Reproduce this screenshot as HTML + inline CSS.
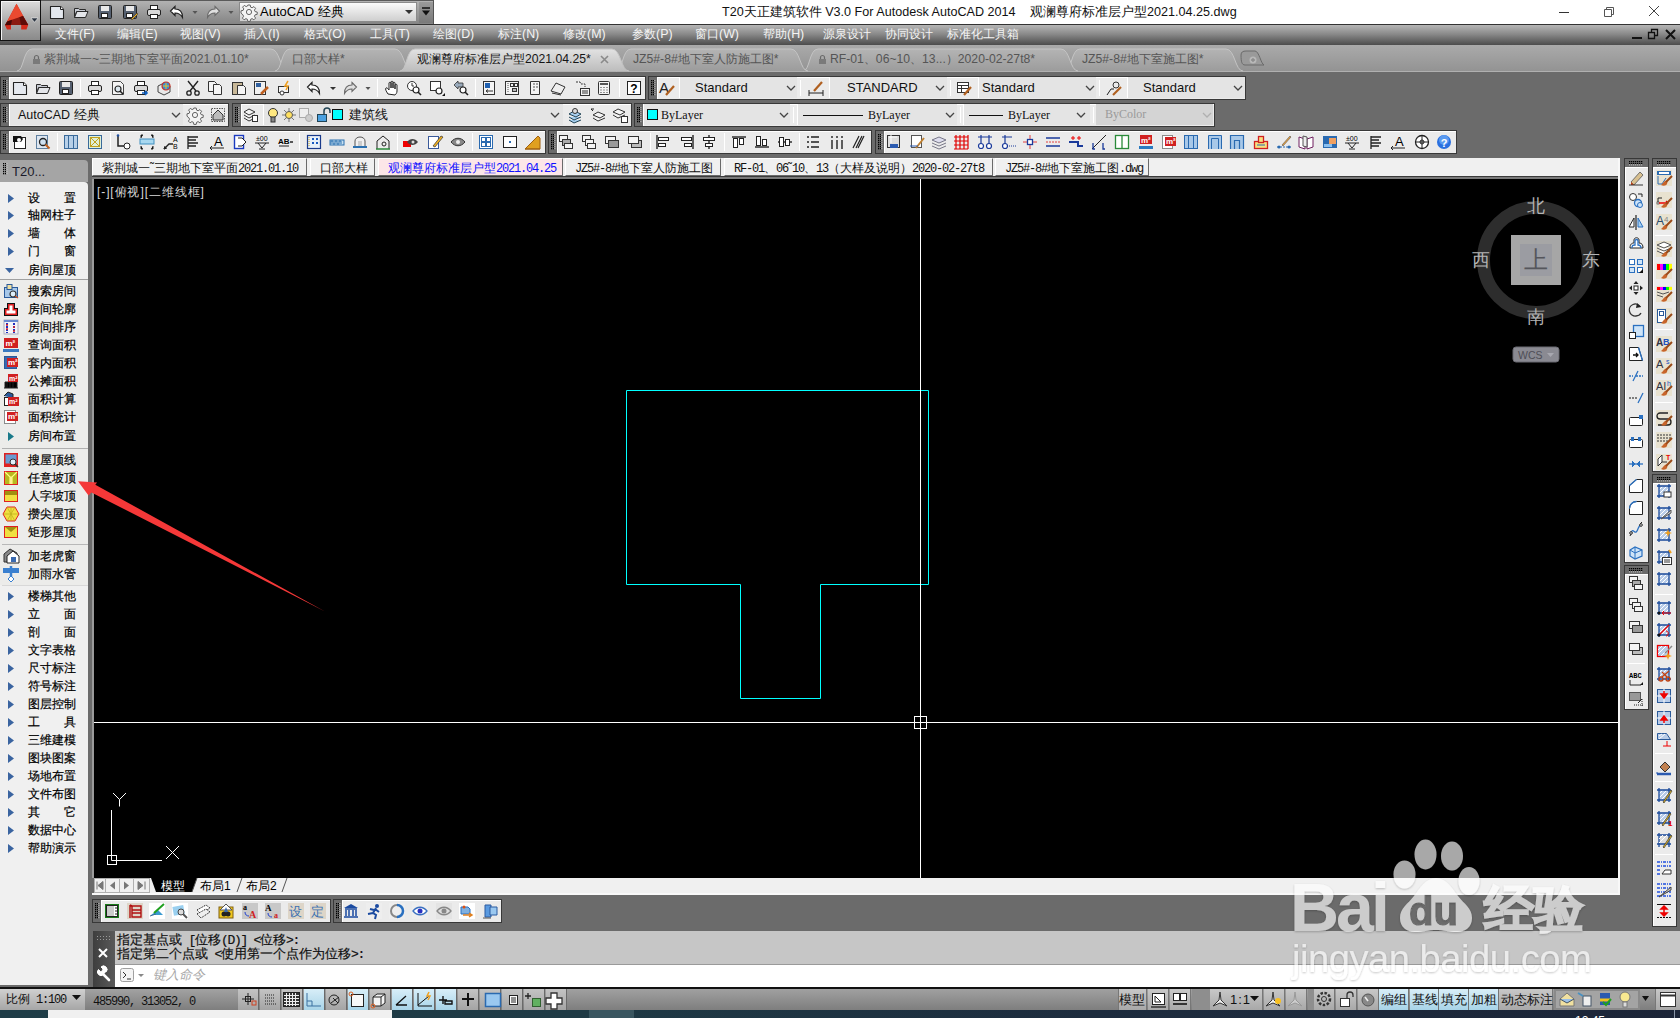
<!DOCTYPE html>
<html><head><meta charset="utf-8"><style>
*{box-sizing:border-box;margin:0;padding:0}
html,body{width:1680px;height:1018px;overflow:hidden;background:#6b6b6b;font-family:"Liberation Sans",sans-serif;font-size:12px;color:#000}
.a{position:absolute}
.t{white-space:nowrap;line-height:1}
svg{overflow:visible}
.tb{background:#f0f0f0;border-right:1px solid #3c3c3c;border-bottom:1px solid #3c3c3c}
.grip{background:#555 radial-gradient(circle,#1e1e1e 0.7px,transparent 0.9px) 0 0/3px 3px}
.sep{width:1px;background:#b8b8b8}
.combo{background:#e4e4e4;border-left:1px solid #fff}
.mono{font-family:"Liberation Mono",monospace}
.serif{font-family:"Liberation Serif",serif}
</style></head><body>
<div class="a" style="left:0px;top:0px;width:1680px;height:24px;background:#fff"></div>
<div class="a" style="left:0px;top:24px;width:1680px;height:1px;background:#333"></div>
<div class="a t" style="left:722px;top:6px;font-size:12.6px;color:#111">T20天正建筑软件 V3.0 For Autodesk AutoCAD 2014</div>
<div class="a t" style="left:1030px;top:6px;font-size:12.6px;color:#111">观澜尊府标准层户型2021.04.25.dwg</div>
<div class="a" style="left:1559px;top:12px;width:10px;height:1px;background:#333"></div>
<svg class="a" style="left:1602px;top:6px" width="12" height="12"><path d="M2.5 3.5h7v7h-7z M4.5 3.5v-2h7v7h-2" fill="none" stroke="#555"/></svg>
<svg class="a" style="left:1648px;top:5px" width="12" height="12"><path d="M1 1l10 10M11 1L1 11" stroke="#444" stroke-width="1"/></svg>
<div class="a" style="left:40px;top:0px;width:394px;height:24px;background:linear-gradient(#5a5a5a 0,#5a5a5a 1px,#b2b2b2 1px,#a0a0a0 40%,#848484);border-right:1px solid #555"></div>
<svg class="a" style="left:49px;top:4px" width="16" height="16" viewBox="0 0 16 16" ><path d="M1.5 2.5h10l3 3v9h-13z" fill="#e4e8ee" stroke="#222" stroke-width="1.1" stroke-linejoin="round"/><path d="M11.5 2.5v3h3" fill="#fff" stroke="#222"/></svg>
<svg class="a" style="left:73px;top:4px" width="16" height="16" viewBox="0 0 16 16" ><path d="M1.5 4.5h4l1 1h6v2h-9l-2 6z" fill="#c8ccd4" stroke="#2a2a2a"/><path d="M1.5 13.5l2.5-6h11l-2.5 6z" fill="#e4e6ea" stroke="#2a2a2a"/></svg>
<svg class="a" style="left:97px;top:4px" width="16" height="16" viewBox="0 0 16 16" ><rect x="1.5" y="1.5" width="13" height="13" rx="1" fill="#556070" stroke="#222"/><rect x="4" y="2" width="8" height="5" fill="#e8e8e8"/><rect x="4.5" y="9.5" width="6" height="4" fill="#fff" stroke="#222"/></svg>
<svg class="a" style="left:122px;top:4px" width="16" height="16" viewBox="0 0 16 16" ><rect x="1.5" y="1.5" width="13" height="13" rx="1" fill="#556070" stroke="#222"/><rect x="4" y="2" width="8" height="5" fill="#e8e8e8"/><rect x="4.5" y="9.5" width="6" height="4" fill="#fff" stroke="#222"/><path d="M9 15l6-6 1 1-6 6z" fill="#f0b020" stroke="#333" stroke-width=".6"/></svg>
<svg class="a" style="left:146px;top:4px" width="16" height="16" viewBox="0 0 16 16" ><rect x="4.5" y="1.5" width="7" height="4" fill="#fff" stroke="#222"/><rect x="1.5" y="5.5" width="13" height="6" rx="1.5" fill="#d8d8d8" stroke="#222"/><rect x="4.5" y="10.5" width="7" height="4" fill="#fff" stroke="#222"/></svg>
<svg class="a" style="left:169px;top:4px" width="16" height="16" viewBox="0 0 16 16" ><path d="M6 2.5L1.5 7 6 11.5V9c3.5 0 5.5 1 7.5 4.5C13.5 8 11 5 6 5z" fill="#fff" stroke="#222" stroke-width="1.2"/></svg>
<svg class="a" style="left:187px;top:4px" width="16" height="16" viewBox="0 0 16 16" ><path d="M5.5 7h5l-2.5 3z" fill="#555"/></svg>
<svg class="a" style="left:205px;top:4px" width="16" height="16" viewBox="0 0 16 16" ><path d="M10 2.5l4.5 4.5L10 11.5V9c-3.5 0-5.5 1-7.5 4.5C2.5 8 5 5 10 5z" fill="#e0e0e0" stroke="#6a6a6a" stroke-width="1.1"/></svg>
<svg class="a" style="left:223px;top:4px" width="16" height="16" viewBox="0 0 16 16" ><path d="M5.5 7h5l-2.5 3z" fill="#555"/></svg>
<div class="a" style="left:239px;top:2px;width:178px;height:20px;background:linear-gradient(#fafafa,#cfcfcf);border:1px solid #8a8a8a"></div>
<svg class="a" style="left:241px;top:4px" width="16" height="16" viewBox="0 0 16 16" ><path d="M6.8 1h2.4l.4 2.1 1.5.7 1.8-1.2 1.7 1.7-1.2 1.8.7 1.5 2.1.4v2.4l-2.1.4-.7 1.5 1.2 1.8-1.7 1.7-1.8-1.2-1.5.7-.4 2.1H6.8l-.4-2.1-1.5-.7-1.8 1.2-1.7-1.7 1.2-1.8-.7-1.5L0 9.2V6.8l2.1-.4.7-1.5-1.2-1.8 1.7-1.7 1.8 1.2 1.5-.7z" fill="#f4f4f4" stroke="#555" stroke-width=".9"/><circle cx="8" cy="8" r="2.6" fill="none" stroke="#555" stroke-width=".9"/></svg>
<div class="a t" style="left:260px;top:5px;font-size:13px;color:#000">AutoCAD 经典</div>
<svg class="a" style="left:404px;top:8px" width="10" height="8"><path d="M1 2h8l-4 4z" fill="#333"/></svg>
<div class="a" style="left:419px;top:2px;width:14px;height:21px;background:linear-gradient(#9a9a9a,#7a7a7a)"></div>
<svg class="a" style="left:421px;top:7px" width="10" height="9"><path d="M1 1h8" stroke="#111" stroke-width="1.5"/><path d="M1 3.5h8l-4 5z" fill="#111"/></svg>
<div class="a" style="left:0px;top:0px;width:41px;height:41px;background:#111"></div>
<div class="a" style="left:1px;top:1px;width:39px;height:39px;background:linear-gradient(#dadada,#a8a8a8 55%,#8a8a8a);border-top:1px solid #f4f4f4;border-left:1px solid #f4f4f4"></div>
<svg class="a" style="left:0;top:0" width="41" height="41" viewBox="0 0 41 41"><path d="M16.5 3.8L28.2 25 26.5 29.6H21.2V25H11V29.6H7L5 25.2Z" fill="#d42a1a"/><path d="M16.5 3.8L23 16 7.2 21.5Z" fill="#ea4a30"/><path d="M7.2 21.5L23 16 28.2 25H5Z" fill="#8c1a10"/><path d="M19.5 17.3L23 16 28.2 25H21Z" fill="#5e0c08"/><path d="M5 25.2L7.2 21.5 12 19.8 11 25Z" fill="#4a0806"/><path d="M31 18h7l-3.5 4.3z" fill="#2a3340" stroke="#fff" stroke-width=".5"/></svg>
<div class="a" style="left:41px;top:25px;width:1639px;height:20px;background:linear-gradient(#b6b6b6,#8a8a8a 45%,#4c4c4c)"></div>
<div class="a" style="left:0px;top:41px;width:41px;height:4px;background:linear-gradient(#5e5e5e,#4c4c4c)"></div>
<div class="a t" style="left:55px;top:28px;font-size:12.4px;color:#f4f4f4">文件(F)</div>
<div class="a t" style="left:117px;top:28px;font-size:12.4px;color:#f4f4f4">编辑(E)</div>
<div class="a t" style="left:180px;top:28px;font-size:12.4px;color:#f4f4f4">视图(V)</div>
<div class="a t" style="left:244px;top:28px;font-size:12.4px;color:#f4f4f4">插入(I)</div>
<div class="a t" style="left:304px;top:28px;font-size:12.4px;color:#f4f4f4">格式(O)</div>
<div class="a t" style="left:370px;top:28px;font-size:12.4px;color:#f4f4f4">工具(T)</div>
<div class="a t" style="left:433px;top:28px;font-size:12.4px;color:#f4f4f4">绘图(D)</div>
<div class="a t" style="left:498px;top:28px;font-size:12.4px;color:#f4f4f4">标注(N)</div>
<div class="a t" style="left:563px;top:28px;font-size:12.4px;color:#f4f4f4">修改(M)</div>
<div class="a t" style="left:632px;top:28px;font-size:12.4px;color:#f4f4f4">参数(P)</div>
<div class="a t" style="left:695px;top:28px;font-size:12.4px;color:#f4f4f4">窗口(W)</div>
<div class="a t" style="left:763px;top:28px;font-size:12.4px;color:#f4f4f4">帮助(H)</div>
<div class="a t" style="left:823px;top:28px;font-size:12.4px;color:#f4f4f4">源泉设计</div>
<div class="a t" style="left:885px;top:28px;font-size:12.4px;color:#f4f4f4">协同设计</div>
<div class="a t" style="left:947px;top:28px;font-size:12.4px;color:#f4f4f4">标准化工具箱</div>
<div class="a" style="left:1632px;top:37px;width:10px;height:2px;background:#111"></div>
<svg class="a" style="left:1647px;top:28px" width="12" height="12"><path d="M1.5 4.5h6v6h-6z M4.5 4.5v-3h6v6h-3" fill="none" stroke="#111" stroke-width="1.3"/></svg>
<svg class="a" style="left:1665px;top:29px" width="11" height="11"><path d="M1 1l9 9M10 1L1 10" stroke="#111" stroke-width="2"/></svg>
<div class="a" style="left:0px;top:45px;width:1680px;height:26px;background:linear-gradient(#aaaaaa,#939393)"></div>
<div class="a" style="left:0px;top:71px;width:1680px;height:1px;background:#b0b0b0"></div>
<div class="a" style="left:0px;top:72px;width:1680px;height:4px;background:#6b6b6b"></div>
<svg class="a" style="left:17px;top:47px" width="272" height="25"><defs><linearGradient id="tabA" x1="0" y1="0" x2="0" y2="1"><stop offset="0" stop-color="#e2e2e2"/><stop offset="1" stop-color="#bdbdbd"/></linearGradient><linearGradient id="tabI" x1="0" y1="0" x2="0" y2="1"><stop offset="0" stop-color="#b4b4b4"/><stop offset="1" stop-color="#9c9c9c"/></linearGradient></defs><path d="M0 24C7 24 6 2 15 2H254C263 2 263 24 271 24" fill="url(#tabI)" stroke="#c4c4c4" stroke-width="1"/></svg>
<svg class="a" style="left:32px;top:54px" width="9" height="11"><path d="M2.5 5V3.5a2 2 0 014 0V5" fill="none" stroke="#6a6a6a" stroke-width="1.2"/><rect x="1" y="5" width="7" height="5" fill="#7a7a7a"/></svg>
<div class="a t" style="left:44px;top:53px;font-size:12.2px;color:#555">紫荆城一~三期地下室平面2021.01.10*</div>
<svg class="a" style="left:275px;top:47px" width="138" height="25"><defs><linearGradient id="tabA" x1="0" y1="0" x2="0" y2="1"><stop offset="0" stop-color="#e2e2e2"/><stop offset="1" stop-color="#bdbdbd"/></linearGradient><linearGradient id="tabI" x1="0" y1="0" x2="0" y2="1"><stop offset="0" stop-color="#b4b4b4"/><stop offset="1" stop-color="#9c9c9c"/></linearGradient></defs><path d="M0 24C7 24 6 2 15 2H120C129 2 129 24 137 24" fill="url(#tabI)" stroke="#c4c4c4" stroke-width="1"/></svg>
<div class="a t" style="left:292px;top:53px;font-size:12.2px;color:#555">口部大样*</div>
<svg class="a" style="left:1065px;top:47px" width="179" height="25"><defs><linearGradient id="tabA" x1="0" y1="0" x2="0" y2="1"><stop offset="0" stop-color="#e2e2e2"/><stop offset="1" stop-color="#bdbdbd"/></linearGradient><linearGradient id="tabI" x1="0" y1="0" x2="0" y2="1"><stop offset="0" stop-color="#b4b4b4"/><stop offset="1" stop-color="#9c9c9c"/></linearGradient></defs><path d="M0 24C7 24 6 2 15 2H161C170 2 170 24 178 24" fill="url(#tabI)" stroke="#c4c4c4" stroke-width="1"/></svg>
<div class="a t" style="left:1082px;top:53px;font-size:12.2px;color:#555">JZ5#-8#地下室施工图*</div>
<svg class="a" style="left:803px;top:47px" width="276" height="25"><defs><linearGradient id="tabA" x1="0" y1="0" x2="0" y2="1"><stop offset="0" stop-color="#e2e2e2"/><stop offset="1" stop-color="#bdbdbd"/></linearGradient><linearGradient id="tabI" x1="0" y1="0" x2="0" y2="1"><stop offset="0" stop-color="#b4b4b4"/><stop offset="1" stop-color="#9c9c9c"/></linearGradient></defs><path d="M0 24C7 24 6 2 15 2H258C267 2 267 24 275 24" fill="url(#tabI)" stroke="#c4c4c4" stroke-width="1"/></svg>
<svg class="a" style="left:818px;top:54px" width="9" height="11"><path d="M2.5 5V3.5a2 2 0 014 0V5" fill="none" stroke="#6a6a6a" stroke-width="1.2"/><rect x="1" y="5" width="7" height="5" fill="#7a7a7a"/></svg>
<div class="a t" style="left:830px;top:53px;font-size:12.2px;color:#555">RF-01、06~10、13...）2020-02-27t8*</div>
<svg class="a" style="left:616px;top:47px" width="193" height="25"><defs><linearGradient id="tabA" x1="0" y1="0" x2="0" y2="1"><stop offset="0" stop-color="#e2e2e2"/><stop offset="1" stop-color="#bdbdbd"/></linearGradient><linearGradient id="tabI" x1="0" y1="0" x2="0" y2="1"><stop offset="0" stop-color="#b4b4b4"/><stop offset="1" stop-color="#9c9c9c"/></linearGradient></defs><path d="M0 24C7 24 6 2 15 2H175C184 2 184 24 192 24" fill="url(#tabI)" stroke="#c4c4c4" stroke-width="1"/></svg>
<div class="a t" style="left:633px;top:53px;font-size:12.2px;color:#555">JZ5#-8#地下室人防施工图*</div>
<svg class="a" style="left:400px;top:47px" width="230" height="25"><defs><linearGradient id="tabA" x1="0" y1="0" x2="0" y2="1"><stop offset="0" stop-color="#e2e2e2"/><stop offset="1" stop-color="#bdbdbd"/></linearGradient><linearGradient id="tabI" x1="0" y1="0" x2="0" y2="1"><stop offset="0" stop-color="#b4b4b4"/><stop offset="1" stop-color="#9c9c9c"/></linearGradient></defs><path d="M0 24C7 24 6 2 15 2H212C221 2 221 24 229 24" fill="url(#tabA)" stroke="#c4c4c4" stroke-width="1"/></svg>
<div class="a t" style="left:417px;top:53px;font-size:12.2px;color:#151515">观澜尊府标准层户型2021.04.25*</div>
<svg class="a" style="left:600px;top:55px" width="9" height="9"><path d="M1 1l7 7M8 1L1 8" stroke="#8a8a8a" stroke-width="1.6"/></svg>
<svg class="a" style="left:1240px;top:50px" width="26" height="20"><path d="M1 5c0-3 2-4 5-4h9c4 0 6 13 9 14H5C2 15 1 12 1 5z" fill="#9a9a9a" stroke="#6a6a6a"/><circle cx="13" cy="10" r="3.5" fill="#b8b8b8"/><path d="M13 8v4M11 10h4" stroke="#8a8a8a" stroke-width="1.3"/></svg>
<div class="a" style="left:0px;top:76px;width:646px;height:24px;background:#383838"></div>
<svg class="a" style="left:1px;top:77px" width="8" height="22"><rect width="8" height="22" fill="#6b6b6b"/><rect x="2" y="3" width="1.3" height="1.3" fill="#000"/><rect x="4" y="3" width="1.3" height="1.3" fill="#000"/><rect x="5.4" y="3" width=".9" height="1.2" fill="#ddd"/><rect x="2" y="5" width="1.3" height="1.3" fill="#000"/><rect x="4" y="5" width="1.3" height="1.3" fill="#000"/><rect x="5.4" y="5" width=".9" height="1.2" fill="#ddd"/><rect x="2" y="7" width="1.3" height="1.3" fill="#000"/><rect x="4" y="7" width="1.3" height="1.3" fill="#000"/><rect x="5.4" y="7" width=".9" height="1.2" fill="#ddd"/><rect x="2" y="9" width="1.3" height="1.3" fill="#000"/><rect x="4" y="9" width="1.3" height="1.3" fill="#000"/><rect x="5.4" y="9" width=".9" height="1.2" fill="#ddd"/><rect x="2" y="11" width="1.3" height="1.3" fill="#000"/><rect x="4" y="11" width="1.3" height="1.3" fill="#000"/><rect x="5.4" y="11" width=".9" height="1.2" fill="#ddd"/><rect x="2" y="13" width="1.3" height="1.3" fill="#000"/><rect x="4" y="13" width="1.3" height="1.3" fill="#000"/><rect x="5.4" y="13" width=".9" height="1.2" fill="#ddd"/><rect x="2" y="15" width="1.3" height="1.3" fill="#000"/><rect x="4" y="15" width="1.3" height="1.3" fill="#000"/><rect x="5.4" y="15" width=".9" height="1.2" fill="#ddd"/><rect x="2" y="17" width="1.3" height="1.3" fill="#000"/><rect x="4" y="17" width="1.3" height="1.3" fill="#000"/><rect x="5.4" y="17" width=".9" height="1.2" fill="#ddd"/></svg>
<div class="a" style="left:9px;top:77px;width:636px;height:22px;background:#ebebeb;border-top:1px solid #fff;border-left:1px solid #fff"></div>
<svg class="a" style="left:12px;top:80px" width="16" height="16" viewBox="0 0 16 16" ><path d="M1.5 2.5h10l3 3v9h-13z" fill="#e4e8ee" stroke="#222" stroke-width="1.1" stroke-linejoin="round"/><path d="M11.5 2.5v3h3" fill="#fff" stroke="#222"/></svg>
<svg class="a" style="left:35px;top:80px" width="16" height="16" viewBox="0 0 16 16" ><path d="M1.5 4.5h4l1 1h6v2h-9l-2 6z" fill="#c8ccd4" stroke="#2a2a2a"/><path d="M1.5 13.5l2.5-6h11l-2.5 6z" fill="#e4e6ea" stroke="#2a2a2a"/></svg>
<svg class="a" style="left:58px;top:80px" width="16" height="16" viewBox="0 0 16 16" ><rect x="1.5" y="1.5" width="13" height="13" rx="1" fill="#556070" stroke="#222"/><rect x="4" y="2" width="8" height="5" fill="#e8e8e8"/><rect x="4.5" y="9.5" width="6" height="4" fill="#fff" stroke="#222"/></svg>
<div class="a" style="left:80px;top:79px;width:1px;height:18px;background:#a8a8a8;border-right:1px solid #fff"></div>
<svg class="a" style="left:87px;top:80px" width="16" height="16" viewBox="0 0 16 16" ><rect x="4.5" y="1.5" width="7" height="4" fill="#fff" stroke="#222"/><rect x="1.5" y="5.5" width="13" height="6" rx="1.5" fill="#d8d8d8" stroke="#222"/><rect x="4.5" y="10.5" width="7" height="4" fill="#fff" stroke="#222"/></svg>
<svg class="a" style="left:110px;top:80px" width="16" height="16" viewBox="0 0 16 16" ><path d="M2.5 1.5h8l3 3v10h-11z" fill="#f4f4f4" stroke="#444"/><circle cx="8" cy="9" r="3" fill="#dde8f0" stroke="#222" stroke-width="1.2"/><path d="M10 11l3 3" stroke="#222" stroke-width="1.6"/></svg>
<svg class="a" style="left:133px;top:80px" width="16" height="16" viewBox="0 0 16 16" ><rect x="4.5" y="1.5" width="7" height="4" fill="#fff" stroke="#222"/><rect x="1.5" y="5.5" width="13" height="6" rx="1.5" fill="#d8d8d8" stroke="#222"/><rect x="4.5" y="10.5" width="7" height="4" fill="#fff" stroke="#222"/><path d="M9 13h5M12 11l2 2-2 2" stroke="#1060c0" stroke-width="1.6" fill="none"/></svg>
<svg class="a" style="left:156px;top:80px" width="16" height="16" viewBox="0 0 16 16" ><path d="M2 6l6-3 6 3v6l-6 3-6-3z" fill="#e8e8e8" stroke="#444"/><circle cx="10" cy="6" r="4" fill="#3090e0" stroke="#d03020" stroke-width="1.2"/><path d="M7 6h6M10 3v6" stroke="#f0c020"/></svg>
<div class="a" style="left:178px;top:79px;width:1px;height:18px;background:#a8a8a8;border-right:1px solid #fff"></div>
<svg class="a" style="left:185px;top:80px" width="16" height="16" viewBox="0 0 16 16" ><path d="M3 1l8 10M13 1l-8 10" stroke="#222" stroke-width="1.4"/><circle cx="4" cy="13" r="2.2" fill="none" stroke="#222" stroke-width="1.3"/><circle cx="12" cy="13" r="2.2" fill="none" stroke="#222" stroke-width="1.3"/></svg>
<svg class="a" style="left:207px;top:80px" width="16" height="16" viewBox="0 0 16 16" ><path d="M1.5 1.5h6l2 2v8h-8z" fill="#f4f4f4" stroke="#333"/><path d="M6.5 4.5h6l2 2v8h-8z" fill="#f4f4f4" stroke="#333"/></svg>
<svg class="a" style="left:231px;top:80px" width="16" height="16" viewBox="0 0 16 16" ><rect x="1.5" y="2.5" width="10" height="12" fill="#c8b898" stroke="#333"/><path d="M6.5 5.5h6l2 2v7h-8z" fill="#f4f4f4" stroke="#333"/></svg>
<svg class="a" style="left:253px;top:80px" width="16" height="16" viewBox="0 0 16 16" ><rect x="1.5" y="1.5" width="11" height="13" fill="#f0f0f0" stroke="#333"/><rect x="3" y="3" width="5" height="4" fill="#3060a0"/><path d="M8 14l7-7" stroke="#c06020" stroke-width="2.5"/></svg>
<svg class="a" style="left:277px;top:80px" width="16" height="16" viewBox="0 0 16 16" ><rect x="1.5" y="6.5" width="10" height="6" fill="#f4f4f4" stroke="#333"/><path d="M11 1l-3 5h3l-2 4" stroke="#f0a020" stroke-width="1.5" fill="none"/><circle cx="5" cy="13" r="2" fill="#fff" stroke="#333"/></svg>
<div class="a" style="left:299px;top:79px;width:1px;height:18px;background:#a8a8a8;border-right:1px solid #fff"></div>
<svg class="a" style="left:306px;top:80px" width="16" height="16" viewBox="0 0 16 16" ><path d="M6 2.5L1.5 7 6 11.5V9c3.5 0 5.5 1 7.5 4.5C13.5 8 11 5 6 5z" fill="#fff" stroke="#222" stroke-width="1.2"/></svg>
<svg class="a" style="left:325px;top:80px" width="16" height="16" viewBox="0 0 16 16" ><path d="M5 7h6l-3 3z" fill="#333"/></svg>
<svg class="a" style="left:342px;top:80px" width="16" height="16" viewBox="0 0 16 16" ><path d="M10 2.5l4.5 4.5L10 11.5V9c-3.5 0-5.5 1-7.5 4.5C2.5 8 5 5 10 5z" fill="#e0e0e0" stroke="#6a6a6a" stroke-width="1.1"/></svg>
<svg class="a" style="left:360px;top:80px" width="16" height="16" viewBox="0 0 16 16" ><path d="M5.5 7h5l-2.5 3z" fill="#555"/></svg>
<div class="a" style="left:377px;top:79px;width:1px;height:18px;background:#a8a8a8;border-right:1px solid #fff"></div>
<svg class="a" style="left:384px;top:80px" width="16" height="16" viewBox="0 0 16 16" ><path d="M4 14c-2-3-3-5-2-6s2 1 3 2V3c0-1 2-1 2 0v5V2c0-1 2-1 2 0v6V3c0-1 2-1 2 0v6V5c0-1 2-1 2 0v6c0 2-1 3-2 4z" fill="#fff" stroke="#222"/></svg>
<svg class="a" style="left:406px;top:80px" width="16" height="16" viewBox="0 0 16 16" ><circle cx="6" cy="6" r="4.5" fill="#fff" stroke="#333"/><path d="M6 3v3h2" stroke="#333" fill="none"/><circle cx="10" cy="10" r="3" fill="#fff" stroke="#222" stroke-width="1.2"/><path d="M12 12l3 3" stroke="#222" stroke-width="1.6"/></svg>
<svg class="a" style="left:429px;top:80px" width="16" height="16" viewBox="0 0 16 16" ><rect x="1.5" y="1.5" width="10" height="9" fill="#fff" stroke="#333"/><circle cx="10" cy="11" r="3" fill="#fff" stroke="#222" stroke-width="1.2"/><path d="M13 16l3-3v3z" fill="#111"/></svg>
<svg class="a" style="left:453px;top:80px" width="16" height="16" viewBox="0 0 16 16" ><path d="M1 5l4-4v2h5v4H5v2z" fill="#9ab" stroke="#333" stroke-width=".8"/><circle cx="10" cy="10" r="3" fill="#fff" stroke="#222" stroke-width="1.2"/><path d="M12 12l3 3" stroke="#222" stroke-width="1.6"/></svg>
<div class="a" style="left:475px;top:79px;width:1px;height:18px;background:#a8a8a8;border-right:1px solid #fff"></div>
<svg class="a" style="left:481px;top:80px" width="16" height="16" viewBox="0 0 16 16" ><rect x="2.5" y="1.5" width="11" height="13" fill="#f4f4f4" stroke="#333"/><rect x="4" y="3" width="5" height="5" fill="#2060b0"/><path d="M5 11h7M5 11l2-1.5M5 11l2 1.5" stroke="#333"/></svg>
<svg class="a" style="left:504px;top:80px" width="16" height="16" viewBox="0 0 16 16" ><rect x="1.5" y="1.5" width="13" height="13" fill="#f4f4f4" stroke="#333"/><path d="M4 3v10" stroke="#555" stroke-dasharray="1 1"/><rect x="6.5" y="3.5" width="3" height="3" fill="none" stroke="#333"/><rect x="10.5" y="3.5" width="3" height="3" fill="none" stroke="#333"/><rect x="8.5" y="8.5" width="4" height="3" fill="#bbb" stroke="#333"/></svg>
<svg class="a" style="left:527px;top:80px" width="16" height="16" viewBox="0 0 16 16" ><path d="M3.5 1.5h9v13h-9z" fill="#f4f4f4" stroke="#333"/><path d="M6 4h2M9 4h2M6 7h2M9 7h2M6 10h2" stroke="#555"/></svg>
<svg class="a" style="left:550px;top:80px" width="16" height="16" viewBox="0 0 16 16" ><path d="M1 11l5-8 9 4-4 7z" fill="#eee" stroke="#333"/><path d="M2 13l9 2" stroke="#333"/></svg>
<svg class="a" style="left:574px;top:80px" width="16" height="16" viewBox="0 0 16 16" ><path d="M2 2h4l1 2h4v3" stroke="#333" stroke-dasharray="2 1" fill="#f4f4f4"/><rect x="6.5" y="8.5" width="9" height="7" fill="#f4f4f4" stroke="#333"/><path d="M8 11h6M8 13h6" stroke="#333"/></svg>
<svg class="a" style="left:596px;top:80px" width="16" height="16" viewBox="0 0 16 16" ><rect x="2.5" y="1.5" width="11" height="13" rx="1" fill="#f4f4f4" stroke="#333"/><rect x="4" y="3" width="8" height="2" fill="#555"/><path d="M4.5 7.5h1M7.5 7.5h1M10.5 7.5h1M4.5 10h1M7.5 10h1M10.5 10h1M4.5 12.5h1M7.5 12.5h1M10.5 12.5h1" stroke="#333"/></svg>
<div class="a" style="left:619px;top:79px;width:1px;height:18px;background:#a8a8a8;border-right:1px solid #fff"></div>
<svg class="a" style="left:626px;top:80px" width="16" height="16" viewBox="0 0 16 16" ><rect x="1.5" y="1.5" width="13" height="13" fill="#fff" stroke="#222"/><text x="8" y="12.5" font-size="12" font-weight="bold" text-anchor="middle" font-family="Liberation Sans">?</text></svg>
<div class="a" style="left:648px;top:76px;width:598px;height:24px;background:#383838"></div>
<svg class="a" style="left:649px;top:77px" width="8" height="22"><rect width="8" height="22" fill="#6b6b6b"/><rect x="2" y="3" width="1.3" height="1.3" fill="#000"/><rect x="4" y="3" width="1.3" height="1.3" fill="#000"/><rect x="5.4" y="3" width=".9" height="1.2" fill="#ddd"/><rect x="2" y="5" width="1.3" height="1.3" fill="#000"/><rect x="4" y="5" width="1.3" height="1.3" fill="#000"/><rect x="5.4" y="5" width=".9" height="1.2" fill="#ddd"/><rect x="2" y="7" width="1.3" height="1.3" fill="#000"/><rect x="4" y="7" width="1.3" height="1.3" fill="#000"/><rect x="5.4" y="7" width=".9" height="1.2" fill="#ddd"/><rect x="2" y="9" width="1.3" height="1.3" fill="#000"/><rect x="4" y="9" width="1.3" height="1.3" fill="#000"/><rect x="5.4" y="9" width=".9" height="1.2" fill="#ddd"/><rect x="2" y="11" width="1.3" height="1.3" fill="#000"/><rect x="4" y="11" width="1.3" height="1.3" fill="#000"/><rect x="5.4" y="11" width=".9" height="1.2" fill="#ddd"/><rect x="2" y="13" width="1.3" height="1.3" fill="#000"/><rect x="4" y="13" width="1.3" height="1.3" fill="#000"/><rect x="5.4" y="13" width=".9" height="1.2" fill="#ddd"/><rect x="2" y="15" width="1.3" height="1.3" fill="#000"/><rect x="4" y="15" width="1.3" height="1.3" fill="#000"/><rect x="5.4" y="15" width=".9" height="1.2" fill="#ddd"/><rect x="2" y="17" width="1.3" height="1.3" fill="#000"/><rect x="4" y="17" width="1.3" height="1.3" fill="#000"/><rect x="5.4" y="17" width=".9" height="1.2" fill="#ddd"/></svg>
<div class="a" style="left:657px;top:77px;width:588px;height:22px;background:#ebebeb;border-top:1px solid #fff;border-left:1px solid #fff"></div>
<svg class="a" style="left:659px;top:80px" width="16" height="16" viewBox="0 0 16 16" ><text x="0" y="13" font-size="15" font-family="Liberation Sans" fill="#222">A</text><path d="M7 15l8-9" stroke="#b06020" stroke-width="2.2"/></svg>
<div class="a combo" style="left:679px;top:77px;width:118px;height:21px;"></div>
<div class="a t" style="left:695px;top:81px;font-size:13px;color:#111">Standard</div>
<svg class="a" style="left:786px;top:85px" width="10" height="6"><path d="M1 1l4 4 4-4" fill="none" stroke="#444" stroke-width="1.3"/></svg>
<div class="a" style="left:800px;top:80px;width:1px;height:16px;background:#a8a8a8;border-right:1px solid #fff"></div>
<svg class="a" style="left:808px;top:80px" width="16" height="16" viewBox="0 0 16 16" ><path d="M1 13h14M1 10v6M15 10v6" stroke="#222"/><path d="M6 11l8-9" stroke="#b06020" stroke-width="2.2"/></svg>
<div class="a combo" style="left:829px;top:77px;width:118px;height:21px;"></div>
<div class="a t" style="left:847px;top:81px;font-size:13px;color:#111">STANDARD</div>
<svg class="a" style="left:935px;top:85px" width="10" height="6"><path d="M1 1l4 4 4-4" fill="none" stroke="#444" stroke-width="1.3"/></svg>
<div class="a" style="left:950px;top:80px;width:1px;height:16px;background:#a8a8a8;border-right:1px solid #fff"></div>
<svg class="a" style="left:956px;top:80px" width="16" height="16" viewBox="0 0 16 16" ><rect x="1.5" y="2.5" width="11" height="10" fill="#fff" stroke="#333"/><path d="M1.5 5.5h11M5.5 5.5v7M1.5 8.5h11" stroke="#333"/><path d="M8 15l7-8" stroke="#b06020" stroke-width="2.2"/></svg>
<div class="a combo" style="left:978px;top:77px;width:118px;height:21px;"></div>
<div class="a t" style="left:982px;top:81px;font-size:13px;color:#111">Standard</div>
<svg class="a" style="left:1085px;top:85px" width="10" height="6"><path d="M1 1l4 4 4-4" fill="none" stroke="#444" stroke-width="1.3"/></svg>
<div class="a" style="left:1099px;top:80px;width:1px;height:16px;background:#a8a8a8;border-right:1px solid #fff"></div>
<svg class="a" style="left:1106px;top:80px" width="16" height="16" viewBox="0 0 16 16" ><path d="M1 15l4-6h3" stroke="#222" fill="none"/><circle cx="10" cy="5" r="3" fill="none" stroke="#333"/><path d="M7 15l8-8" stroke="#b06020" stroke-width="2.2"/></svg>
<div class="a combo" style="left:1127px;top:77px;width:118px;height:21px;"></div>
<div class="a t" style="left:1143px;top:81px;font-size:13px;color:#111">Standard</div>
<svg class="a" style="left:1233px;top:85px" width="10" height="6"><path d="M1 1l4 4 4-4" fill="none" stroke="#444" stroke-width="1.3"/></svg>
<div class="a" style="left:0px;top:103px;width:229px;height:24px;background:#383838"></div>
<svg class="a" style="left:1px;top:104px" width="8" height="22"><rect width="8" height="22" fill="#6b6b6b"/><rect x="2" y="3" width="1.3" height="1.3" fill="#000"/><rect x="4" y="3" width="1.3" height="1.3" fill="#000"/><rect x="5.4" y="3" width=".9" height="1.2" fill="#ddd"/><rect x="2" y="5" width="1.3" height="1.3" fill="#000"/><rect x="4" y="5" width="1.3" height="1.3" fill="#000"/><rect x="5.4" y="5" width=".9" height="1.2" fill="#ddd"/><rect x="2" y="7" width="1.3" height="1.3" fill="#000"/><rect x="4" y="7" width="1.3" height="1.3" fill="#000"/><rect x="5.4" y="7" width=".9" height="1.2" fill="#ddd"/><rect x="2" y="9" width="1.3" height="1.3" fill="#000"/><rect x="4" y="9" width="1.3" height="1.3" fill="#000"/><rect x="5.4" y="9" width=".9" height="1.2" fill="#ddd"/><rect x="2" y="11" width="1.3" height="1.3" fill="#000"/><rect x="4" y="11" width="1.3" height="1.3" fill="#000"/><rect x="5.4" y="11" width=".9" height="1.2" fill="#ddd"/><rect x="2" y="13" width="1.3" height="1.3" fill="#000"/><rect x="4" y="13" width="1.3" height="1.3" fill="#000"/><rect x="5.4" y="13" width=".9" height="1.2" fill="#ddd"/><rect x="2" y="15" width="1.3" height="1.3" fill="#000"/><rect x="4" y="15" width="1.3" height="1.3" fill="#000"/><rect x="5.4" y="15" width=".9" height="1.2" fill="#ddd"/><rect x="2" y="17" width="1.3" height="1.3" fill="#000"/><rect x="4" y="17" width="1.3" height="1.3" fill="#000"/><rect x="5.4" y="17" width=".9" height="1.2" fill="#ddd"/></svg>
<div class="a" style="left:9px;top:104px;width:219px;height:22px;background:#ebebeb;border-top:1px solid #fff;border-left:1px solid #fff"></div>
<div class="a combo" style="left:9px;top:104px;width:174px;height:21px;"></div>
<div class="a t" style="left:18px;top:109px;font-size:12.5px;color:#111">AutoCAD 经典</div>
<svg class="a" style="left:171px;top:112px" width="10" height="6"><path d="M1 1l4 4 4-4" fill="none" stroke="#444" stroke-width="1.3"/></svg>
<svg class="a" style="left:187px;top:107px" width="16" height="16" viewBox="0 0 16 16" ><path d="M6.8 1h2.4l.4 2.1 1.5.7 1.8-1.2 1.7 1.7-1.2 1.8.7 1.5 2.1.4v2.4l-2.1.4-.7 1.5 1.2 1.8-1.7 1.7-1.8-1.2-1.5.7-.4 2.1H6.8l-.4-2.1-1.5-.7-1.8 1.2-1.7-1.7 1.2-1.8-.7-1.5L0 9.2V6.8l2.1-.4.7-1.5-1.2-1.8 1.7-1.7 1.8 1.2 1.5-.7z" fill="#f4f4f4" stroke="#555" stroke-width=".9"/><circle cx="8" cy="8" r="2.6" fill="none" stroke="#555" stroke-width=".9"/></svg>
<svg class="a" style="left:210px;top:107px" width="16" height="16" viewBox="0 0 16 16" ><rect x="1.5" y="1.5" width="13" height="13" fill="none" stroke="#555" stroke-dasharray="1.5 1"/><path d="M3 8l5-5 5 5v5H3z" fill="#bbb" stroke="#333"/></svg>
<div class="a" style="left:232px;top:103px;width:400px;height:24px;background:#383838"></div>
<svg class="a" style="left:233px;top:104px" width="8" height="22"><rect width="8" height="22" fill="#6b6b6b"/><rect x="2" y="3" width="1.3" height="1.3" fill="#000"/><rect x="4" y="3" width="1.3" height="1.3" fill="#000"/><rect x="5.4" y="3" width=".9" height="1.2" fill="#ddd"/><rect x="2" y="5" width="1.3" height="1.3" fill="#000"/><rect x="4" y="5" width="1.3" height="1.3" fill="#000"/><rect x="5.4" y="5" width=".9" height="1.2" fill="#ddd"/><rect x="2" y="7" width="1.3" height="1.3" fill="#000"/><rect x="4" y="7" width="1.3" height="1.3" fill="#000"/><rect x="5.4" y="7" width=".9" height="1.2" fill="#ddd"/><rect x="2" y="9" width="1.3" height="1.3" fill="#000"/><rect x="4" y="9" width="1.3" height="1.3" fill="#000"/><rect x="5.4" y="9" width=".9" height="1.2" fill="#ddd"/><rect x="2" y="11" width="1.3" height="1.3" fill="#000"/><rect x="4" y="11" width="1.3" height="1.3" fill="#000"/><rect x="5.4" y="11" width=".9" height="1.2" fill="#ddd"/><rect x="2" y="13" width="1.3" height="1.3" fill="#000"/><rect x="4" y="13" width="1.3" height="1.3" fill="#000"/><rect x="5.4" y="13" width=".9" height="1.2" fill="#ddd"/><rect x="2" y="15" width="1.3" height="1.3" fill="#000"/><rect x="4" y="15" width="1.3" height="1.3" fill="#000"/><rect x="5.4" y="15" width=".9" height="1.2" fill="#ddd"/><rect x="2" y="17" width="1.3" height="1.3" fill="#000"/><rect x="4" y="17" width="1.3" height="1.3" fill="#000"/><rect x="5.4" y="17" width=".9" height="1.2" fill="#ddd"/></svg>
<div class="a" style="left:241px;top:104px;width:390px;height:22px;background:#ebebeb;border-top:1px solid #fff;border-left:1px solid #fff"></div>
<svg class="a" style="left:243px;top:107px" width="16" height="16" viewBox="0 0 16 16" ><path d="M1 5l5-3 6 3-6 3z M1 8l5 3 6-3 M1 11l5 3 6-3" fill="#f4f4f4" stroke="#333"/><rect x="9.5" y="8.5" width="5" height="6" fill="#fff" stroke="#333"/></svg>
<div class="a combo" style="left:263px;top:104px;width:300px;height:21px;"></div>
<svg class="a" style="left:265px;top:107px" width="16" height="16" viewBox="0 0 16 16" ><circle cx="8" cy="6" r="4.5" fill="#ffe880" stroke="#333"/><rect x="6" y="10" width="4" height="5" fill="#888" stroke="#333"/></svg>
<svg class="a" style="left:281px;top:107px" width="16" height="16" viewBox="0 0 16 16" ><circle cx="8" cy="8" r="3.5" fill="#ffe060" stroke="#555"/><path d="M8 1v3M8 12v3M1 8h3M12 8h3M3 3l2 2M11 11l2 2M3 13l2-2M11 5l2-2" stroke="#777"/></svg>
<svg class="a" style="left:298px;top:107px" width="16" height="16" viewBox="0 0 16 16" ><rect x="1.5" y="1.5" width="9" height="9" fill="#eee" stroke="#aaa"/><circle cx="11" cy="11" r="3.5" fill="#ccc" stroke="#aaa"/></svg>
<svg class="a" style="left:316px;top:107px" width="16" height="16" viewBox="0 0 16 16" ><rect x="1.5" y="7.5" width="9" height="7" fill="#4aa0e0" stroke="#245"/><path d="M8 7V4a3 3 0 016 0v2" fill="none" stroke="#245" stroke-width="1.5"/></svg>
<svg class="a" style="left:332px;top:109px" width="12" height="12"><rect x=".5" y=".5" width="10" height="10" fill="#00ffff" stroke="#111"/></svg>
<div class="a t" style="left:349px;top:109px;font-size:12.6px;color:#111">建筑线</div>
<svg class="a" style="left:550px;top:112px" width="10" height="6"><path d="M1 1l4 4 4-4" fill="none" stroke="#444" stroke-width="1.3"/></svg>
<svg class="a" style="left:566px;top:107px" width="16" height="16" viewBox="0 0 16 16" ><path d="M3 7l5-3 7 3-5 3z M3 10l5 3 7-3 M3 13l5 3 7-3" fill="#a8d0f0" stroke="#245"/><circle cx="9" cy="4" r="2.5" fill="#ddd" stroke="#333"/></svg>
<svg class="a" style="left:589px;top:107px" width="16" height="16" viewBox="0 0 16 16" ><path d="M4 8l5-3 7 3-5 3z M4 11l5 3 7-3" fill="#f4f4f4" stroke="#333"/><path d="M2 2l3 0M2 2l2 2" stroke="#222"/></svg>
<svg class="a" style="left:612px;top:107px" width="16" height="16" viewBox="0 0 16 16" ><path d="M1 5l5-3 7 3-5 3z M1 8l5 3 7-3" fill="#f4f4f4" stroke="#333"/><rect x="9.5" y="9.5" width="6" height="6" fill="#fff" stroke="#333"/></svg>
<div class="a" style="left:634px;top:103px;width:581px;height:24px;background:#383838"></div>
<svg class="a" style="left:635px;top:104px" width="8" height="22"><rect width="8" height="22" fill="#6b6b6b"/><rect x="2" y="3" width="1.3" height="1.3" fill="#000"/><rect x="4" y="3" width="1.3" height="1.3" fill="#000"/><rect x="5.4" y="3" width=".9" height="1.2" fill="#ddd"/><rect x="2" y="5" width="1.3" height="1.3" fill="#000"/><rect x="4" y="5" width="1.3" height="1.3" fill="#000"/><rect x="5.4" y="5" width=".9" height="1.2" fill="#ddd"/><rect x="2" y="7" width="1.3" height="1.3" fill="#000"/><rect x="4" y="7" width="1.3" height="1.3" fill="#000"/><rect x="5.4" y="7" width=".9" height="1.2" fill="#ddd"/><rect x="2" y="9" width="1.3" height="1.3" fill="#000"/><rect x="4" y="9" width="1.3" height="1.3" fill="#000"/><rect x="5.4" y="9" width=".9" height="1.2" fill="#ddd"/><rect x="2" y="11" width="1.3" height="1.3" fill="#000"/><rect x="4" y="11" width="1.3" height="1.3" fill="#000"/><rect x="5.4" y="11" width=".9" height="1.2" fill="#ddd"/><rect x="2" y="13" width="1.3" height="1.3" fill="#000"/><rect x="4" y="13" width="1.3" height="1.3" fill="#000"/><rect x="5.4" y="13" width=".9" height="1.2" fill="#ddd"/><rect x="2" y="15" width="1.3" height="1.3" fill="#000"/><rect x="4" y="15" width="1.3" height="1.3" fill="#000"/><rect x="5.4" y="15" width=".9" height="1.2" fill="#ddd"/><rect x="2" y="17" width="1.3" height="1.3" fill="#000"/><rect x="4" y="17" width="1.3" height="1.3" fill="#000"/><rect x="5.4" y="17" width=".9" height="1.2" fill="#ddd"/></svg>
<div class="a" style="left:643px;top:104px;width:571px;height:22px;background:#ebebeb;border-top:1px solid #fff;border-left:1px solid #fff"></div>
<div class="a combo" style="left:643px;top:104px;width:147px;height:21px;"></div>
<svg class="a" style="left:647px;top:109px" width="12" height="12"><rect x=".5" y=".5" width="10" height="10" fill="#00ffff" stroke="#111"/></svg>
<div class="a t serif" style="left:661px;top:109px;font-size:12px;color:#111">ByLayer</div>
<svg class="a" style="left:779px;top:112px" width="10" height="6"><path d="M1 1l4 4 4-4" fill="none" stroke="#444" stroke-width="1.3"/></svg>
<div class="a" style="left:793px;top:107px;width:1px;height:16px;background:#a8a8a8;border-right:1px solid #fff"></div>
<div class="a combo" style="left:797px;top:104px;width:160px;height:21px;"></div>
<div class="a" style="left:803px;top:115px;width:60px;height:1px;background:#111"></div>
<div class="a t serif" style="left:868px;top:109px;font-size:12px;color:#111">ByLayer</div>
<svg class="a" style="left:945px;top:112px" width="10" height="6"><path d="M1 1l4 4 4-4" fill="none" stroke="#444" stroke-width="1.3"/></svg>
<div class="a" style="left:960px;top:107px;width:1px;height:16px;background:#a8a8a8;border-right:1px solid #fff"></div>
<div class="a combo" style="left:963px;top:104px;width:127px;height:21px;"></div>
<div class="a" style="left:969px;top:115px;width:34px;height:1px;background:#111"></div>
<div class="a t serif" style="left:1008px;top:109px;font-size:12px;color:#111">ByLayer</div>
<svg class="a" style="left:1076px;top:112px" width="10" height="6"><path d="M1 1l4 4 4-4" fill="none" stroke="#444" stroke-width="1.3"/></svg>
<div class="a" style="left:1093px;top:107px;width:1px;height:16px;background:#a8a8a8;border-right:1px solid #fff"></div>
<div class="a" style="left:1096px;top:104px;width:117px;height:21px;background:#d4d4d4"></div>
<div class="a t serif" style="left:1105px;top:108px;font-size:12px;color:#9a9a9a">ByColor</div>
<svg class="a" style="left:1202px;top:112px" width="10" height="6"><path d="M1 1l4 4 4-4" fill="none" stroke="#b0b0b0" stroke-width="1.3"/></svg>
<div class="a" style="left:0px;top:130px;width:546px;height:24px;background:#383838"></div>
<svg class="a" style="left:1px;top:131px" width="8" height="22"><rect width="8" height="22" fill="#6b6b6b"/><rect x="2" y="3" width="1.3" height="1.3" fill="#000"/><rect x="4" y="3" width="1.3" height="1.3" fill="#000"/><rect x="5.4" y="3" width=".9" height="1.2" fill="#ddd"/><rect x="2" y="5" width="1.3" height="1.3" fill="#000"/><rect x="4" y="5" width="1.3" height="1.3" fill="#000"/><rect x="5.4" y="5" width=".9" height="1.2" fill="#ddd"/><rect x="2" y="7" width="1.3" height="1.3" fill="#000"/><rect x="4" y="7" width="1.3" height="1.3" fill="#000"/><rect x="5.4" y="7" width=".9" height="1.2" fill="#ddd"/><rect x="2" y="9" width="1.3" height="1.3" fill="#000"/><rect x="4" y="9" width="1.3" height="1.3" fill="#000"/><rect x="5.4" y="9" width=".9" height="1.2" fill="#ddd"/><rect x="2" y="11" width="1.3" height="1.3" fill="#000"/><rect x="4" y="11" width="1.3" height="1.3" fill="#000"/><rect x="5.4" y="11" width=".9" height="1.2" fill="#ddd"/><rect x="2" y="13" width="1.3" height="1.3" fill="#000"/><rect x="4" y="13" width="1.3" height="1.3" fill="#000"/><rect x="5.4" y="13" width=".9" height="1.2" fill="#ddd"/><rect x="2" y="15" width="1.3" height="1.3" fill="#000"/><rect x="4" y="15" width="1.3" height="1.3" fill="#000"/><rect x="5.4" y="15" width=".9" height="1.2" fill="#ddd"/><rect x="2" y="17" width="1.3" height="1.3" fill="#000"/><rect x="4" y="17" width="1.3" height="1.3" fill="#000"/><rect x="5.4" y="17" width=".9" height="1.2" fill="#ddd"/></svg>
<div class="a" style="left:9px;top:131px;width:536px;height:22px;background:#ebebeb;border-top:1px solid #fff;border-left:1px solid #fff"></div>
<svg class="a" style="left:12px;top:134px" width="16" height="16" viewBox="0 0 16 16" ><rect x="2.5" y="3.5" width="11" height="11" fill="#fff" stroke="#222"/><path d="M1 2h8l2 3-2 3H1z" fill="#111"/><circle cx="7" cy="6" r="2" fill="#fff"/></svg>
<svg class="a" style="left:35px;top:134px" width="16" height="16" viewBox="0 0 16 16" ><rect x="1.5" y="1.5" width="11" height="13" fill="#dde6f0" stroke="#6080a0"/><circle cx="8" cy="8" r="3.5" fill="#cfe0f0" stroke="#222" stroke-width="1.3"/><path d="M10.5 10.5l4 4" stroke="#c06020" stroke-width="2"/></svg>
<div class="a" style="left:57px;top:133px;width:1px;height:18px;background:#a8a8a8;border-right:1px solid #fff"></div>
<svg class="a" style="left:63px;top:134px" width="16" height="16" viewBox="0 0 16 16" ><rect x="1.5" y="1.5" width="13" height="13" fill="#b8d0e8" stroke="#3a6a9a"/><path d="M5.5 1.5v13M10.5 1.5v13" stroke="#3a6a9a"/></svg>
<svg class="a" style="left:87px;top:134px" width="16" height="16" viewBox="0 0 16 16" ><rect x="1.5" y="1.5" width="13" height="13" fill="#e0f0d8" stroke="#3a6a9a"/><path d="M3 3l10 10M13 3L3 13" stroke="#c0a020"/><rect x="3.5" y="3.5" width="9" height="9" fill="none" stroke="#c0a020"/></svg>
<div class="a" style="left:110px;top:133px;width:1px;height:18px;background:#a8a8a8;border-right:1px solid #fff"></div>
<svg class="a" style="left:115px;top:134px" width="16" height="16" viewBox="0 0 16 16" ><path d="M3 1v11h6" stroke="#222" stroke-width="1.5" fill="none"/><circle cx="12" cy="12" r="3" fill="#fff" stroke="#222"/><circle cx="3" cy="1.5" r="1.3" fill="#2050a0"/></svg>
<svg class="a" style="left:139px;top:134px" width="16" height="16" viewBox="0 0 16 16" ><rect x="1" y="5" width="14" height="5" fill="#a8d8f0" stroke="#4090c0"/><path d="M4 1h-2v3M12 1h2v3M4 15h-2v-3M12 15h2v-3" stroke="#222"/></svg>
<svg class="a" style="left:163px;top:134px" width="16" height="16" viewBox="0 0 16 16" ><path d="M1 15l5-5h4" stroke="#222" stroke-width="1.3" fill="none"/><path d="M1 15l1-3M1 15l3-1" stroke="#222"/><text x="10" y="8" font-size="7" font-family="Liberation Sans">A</text><text x="10" y="15" font-size="7" font-family="Liberation Sans">B</text></svg>
<svg class="a" style="left:185px;top:134px" width="16" height="16" viewBox="0 0 16 16" ><path d="M3 2v13M3 3h10M3 6h8M3 9h10M3 12h8" stroke="#222" stroke-width="1.3"/></svg>
<svg class="a" style="left:209px;top:134px" width="16" height="16" viewBox="0 0 16 16" ><text x="5" y="12" font-size="13" font-family="Liberation Sans">A</text><path d="M1 14h14M1 14l2-2M1 14l2 2" stroke="#222"/></svg>
<svg class="a" style="left:232px;top:134px" width="16" height="16" viewBox="0 0 16 16" ><rect x="2.5" y="1.5" width="9" height="13" fill="#fff" stroke="#1a3ac0" stroke-width="1.4"/><path d="M6 4h4l4 4-4 4H6" fill="#fff" stroke="#222"/></svg>
<svg class="a" style="left:254px;top:134px" width="16" height="16" viewBox="0 0 16 16" ><text x="2" y="7" font-size="7" font-family="Liberation Sans">±00</text><path d="M1 9h14M4 9l4 5 4-5M5 15h6" stroke="#222" fill="none"/></svg>
<svg class="a" style="left:278px;top:134px" width="16" height="16" viewBox="0 0 16 16" ><text x="0" y="10" font-size="8" font-weight="bold" font-family="Liberation Sans">AB</text><path d="M1 12h10" stroke="#222"/><rect x="12" y="7" width="3" height="2" fill="#555"/></svg>
<div class="a" style="left:299px;top:133px;width:1px;height:18px;background:#a8a8a8;border-right:1px solid #fff"></div>
<svg class="a" style="left:306px;top:134px" width="16" height="16" viewBox="0 0 16 16" ><rect x="1.5" y="1.5" width="13" height="13" fill="#e8f0f8" stroke="#1a3a8a" stroke-width="1.2"/><rect x="6" y="4" width="2" height="2" fill="#1a5ac0"/><rect x="10" y="4" width="2" height="2" fill="#1a5ac0"/><rect x="6" y="8" width="2" height="2" fill="#1a5ac0"/><rect x="10" y="8" width="2" height="2" fill="#1a5ac0"/><path d="M3 3v10" stroke="#c0a020" stroke-dasharray="1 1"/></svg>
<svg class="a" style="left:329px;top:134px" width="16" height="16" viewBox="0 0 16 16" ><rect x="1" y="6" width="14" height="5" fill="#c8e0f0" stroke="#2a70b0"/><path d="M2 10v-3h2v3h2v-3h2v3h2v-3h2v3" stroke="#2a70b0" fill="none"/></svg>
<svg class="a" style="left:352px;top:134px" width="16" height="16" viewBox="0 0 16 16" ><path d="M3 13V7a5 4 0 0110 0v6" fill="#f0f0f0" stroke="#555"/><path d="M1 13h14" stroke="#2a70b0" stroke-width="2"/><rect x="6" y="7" width="4" height="5" fill="#ccc"/></svg>
<svg class="a" style="left:375px;top:134px" width="16" height="16" viewBox="0 0 16 16" ><path d="M2 15V7l6-5 6 5v8" fill="none" stroke="#222"/><path d="M1 15h14" stroke="#2a8a3a" stroke-width="1.5"/><circle cx="9" cy="10" r="2" fill="none" stroke="#222"/></svg>
<div class="a" style="left:397px;top:133px;width:1px;height:18px;background:#a8a8a8;border-right:1px solid #fff"></div>
<svg class="a" style="left:403px;top:134px" width="16" height="16" viewBox="0 0 16 16" ><rect x="0" y="7" width="8" height="6" fill="#e00"/><path d="M4 8c3-4 8-4 11 0-3 4-8 4-11 0z" fill="#444"/><circle cx="10" cy="8" r="1.5" fill="#ddd"/></svg>
<svg class="a" style="left:427px;top:134px" width="16" height="16" viewBox="0 0 16 16" ><rect x="1.5" y="2.5" width="10" height="12" fill="#fff" stroke="#3a5a9a"/><path d="M6 12l8-10 2 1-8 10z" fill="#f0b020" stroke="#333" stroke-width=".7"/></svg>
<svg class="a" style="left:450px;top:134px" width="16" height="16" viewBox="0 0 16 16" ><path d="M1 8c4-5 10-5 14 0-4 5-10 5-14 0z" fill="#888" stroke="#333"/><circle cx="8" cy="8" r="2" fill="#eee"/></svg>
<div class="a" style="left:472px;top:133px;width:1px;height:18px;background:#a8a8a8;border-right:1px solid #fff"></div>
<svg class="a" style="left:478px;top:134px" width="16" height="16" viewBox="0 0 16 16" ><rect x="1.5" y="1.5" width="13" height="13" fill="#fff" stroke="#2a6ab0"/><rect x="3.5" y="3.5" width="4" height="4" fill="none" stroke="#2a6ab0"/><rect x="8.5" y="3.5" width="4" height="4" fill="none" stroke="#2a6ab0"/><rect x="3.5" y="8.5" width="4" height="4" fill="none" stroke="#2a6ab0"/><rect x="8.5" y="8.5" width="4" height="4" fill="none" stroke="#2a6ab0"/></svg>
<svg class="a" style="left:502px;top:134px" width="16" height="16" viewBox="0 0 16 16" ><rect x="1.5" y="2.5" width="13" height="11" fill="#fff" stroke="#222"/><rect x="7" y="7" width="2" height="2" fill="#2a6ab0"/></svg>
<svg class="a" style="left:524px;top:134px" width="16" height="16" viewBox="0 0 16 16" ><path d="M1 15l13-13 2 2v11z" fill="#e0a020" stroke="#a06010"/><path d="M1 15h15" stroke="#a06010"/></svg>
<div class="a" style="left:548px;top:130px;width:324px;height:24px;background:#383838"></div>
<svg class="a" style="left:549px;top:131px" width="8" height="22"><rect width="8" height="22" fill="#6b6b6b"/><rect x="2" y="3" width="1.3" height="1.3" fill="#000"/><rect x="4" y="3" width="1.3" height="1.3" fill="#000"/><rect x="5.4" y="3" width=".9" height="1.2" fill="#ddd"/><rect x="2" y="5" width="1.3" height="1.3" fill="#000"/><rect x="4" y="5" width="1.3" height="1.3" fill="#000"/><rect x="5.4" y="5" width=".9" height="1.2" fill="#ddd"/><rect x="2" y="7" width="1.3" height="1.3" fill="#000"/><rect x="4" y="7" width="1.3" height="1.3" fill="#000"/><rect x="5.4" y="7" width=".9" height="1.2" fill="#ddd"/><rect x="2" y="9" width="1.3" height="1.3" fill="#000"/><rect x="4" y="9" width="1.3" height="1.3" fill="#000"/><rect x="5.4" y="9" width=".9" height="1.2" fill="#ddd"/><rect x="2" y="11" width="1.3" height="1.3" fill="#000"/><rect x="4" y="11" width="1.3" height="1.3" fill="#000"/><rect x="5.4" y="11" width=".9" height="1.2" fill="#ddd"/><rect x="2" y="13" width="1.3" height="1.3" fill="#000"/><rect x="4" y="13" width="1.3" height="1.3" fill="#000"/><rect x="5.4" y="13" width=".9" height="1.2" fill="#ddd"/><rect x="2" y="15" width="1.3" height="1.3" fill="#000"/><rect x="4" y="15" width="1.3" height="1.3" fill="#000"/><rect x="5.4" y="15" width=".9" height="1.2" fill="#ddd"/><rect x="2" y="17" width="1.3" height="1.3" fill="#000"/><rect x="4" y="17" width="1.3" height="1.3" fill="#000"/><rect x="5.4" y="17" width=".9" height="1.2" fill="#ddd"/></svg>
<div class="a" style="left:557px;top:131px;width:314px;height:22px;background:#ebebeb;border-top:1px solid #fff;border-left:1px solid #fff"></div>
<svg class="a" style="left:558px;top:134px" width="16" height="16" viewBox="0 0 16 16" ><rect x="1.5" y="1.5" width="8" height="6" fill="#f4f4f4" stroke="#333"/><rect x="4.5" y="5.5" width="8" height="6" fill="#aaa" stroke="#333"/><rect x="6.5" y="9.5" width="8" height="5" fill="#f4f4f4" stroke="#333"/></svg>
<svg class="a" style="left:581px;top:134px" width="16" height="16" viewBox="0 0 16 16" ><rect x="1.5" y="1.5" width="8" height="6" fill="#f4f4f4" stroke="#333"/><rect x="4.5" y="5.5" width="8" height="6" fill="#f4f4f4" stroke="#333"/><rect x="6.5" y="9.5" width="8" height="5" fill="#f4f4f4" stroke="#333"/></svg>
<svg class="a" style="left:604px;top:134px" width="16" height="16" viewBox="0 0 16 16" ><rect x="1.5" y="2.5" width="10" height="7" fill="#f4f4f4" stroke="#333"/><rect x="4.5" y="6.5" width="10" height="7" fill="#999" stroke="#333"/></svg>
<svg class="a" style="left:627px;top:134px" width="16" height="16" viewBox="0 0 16 16" ><rect x="1.5" y="2.5" width="10" height="7" fill="#f4f4f4" stroke="#333"/><rect x="4.5" y="6.5" width="10" height="7" fill="#bbb" stroke="#333"/><rect x="1.5" y="2.5" width="10" height="7" fill="#f4f4f4" stroke="#333"/></svg>
<div class="a" style="left:650px;top:133px;width:1px;height:18px;background:#a8a8a8;border-right:1px solid #fff"></div>
<svg class="a" style="left:655px;top:134px" width="16" height="16" viewBox="0 0 16 16" ><path d="M2 1v14" stroke="#222" stroke-width="1.4"/><rect x="3.5" y="3.5" width="10" height="3" fill="#fff" stroke="#222"/><rect x="3.5" y="9.5" width="7" height="3" fill="#fff" stroke="#222"/></svg>
<svg class="a" style="left:679px;top:134px" width="16" height="16" viewBox="0 0 16 16" ><path d="M14 1v14" stroke="#222" stroke-width="1.4"/><rect x="2.5" y="3.5" width="10" height="3" fill="#fff" stroke="#222"/><rect x="5.5" y="9.5" width="7" height="3" fill="#fff" stroke="#222"/></svg>
<svg class="a" style="left:701px;top:134px" width="16" height="16" viewBox="0 0 16 16" ><path d="M8 1v14" stroke="#222" stroke-width="1.4"/><rect x="2.5" y="3.5" width="11" height="3" fill="#fff" stroke="#222"/><rect x="4.5" y="9.5" width="7" height="3" fill="#fff" stroke="#222"/></svg>
<div class="a" style="left:724px;top:133px;width:1px;height:18px;background:#a8a8a8;border-right:1px solid #fff"></div>
<svg class="a" style="left:731px;top:134px" width="16" height="16" viewBox="0 0 16 16" ><path d="M1 3h14" stroke="#222" stroke-width="1.4"/><rect x="2.5" y="4.5" width="4" height="9" fill="#fff" stroke="#222"/><rect x="8.5" y="4.5" width="4" height="6" fill="#fff" stroke="#222"/></svg>
<svg class="a" style="left:754px;top:134px" width="16" height="16" viewBox="0 0 16 16" ><path d="M1 13h14" stroke="#222" stroke-width="1.4"/><rect x="2.5" y="2.5" width="4" height="9" fill="#fff" stroke="#222"/><rect x="8.5" y="5.5" width="4" height="6" fill="#fff" stroke="#222"/></svg>
<svg class="a" style="left:777px;top:134px" width="16" height="16" viewBox="0 0 16 16" ><path d="M1 8h14" stroke="#222" stroke-width="1.4"/><rect x="2.5" y="3.5" width="4" height="9" fill="#fff" stroke="#222"/><rect x="8.5" y="5.5" width="4" height="6" fill="#fff" stroke="#222"/></svg>
<div class="a" style="left:799px;top:133px;width:1px;height:18px;background:#a8a8a8;border-right:1px solid #fff"></div>
<svg class="a" style="left:805px;top:134px" width="16" height="16" viewBox="0 0 16 16" ><path d="M2 3h2M2 8h2M2 13h2M6 3h8M6 8h8M6 13h8" stroke="#222" stroke-width="1.4"/></svg>
<svg class="a" style="left:829px;top:134px" width="16" height="16" viewBox="0 0 16 16" ><path d="M3 2v2M8 2v2M13 2v2M3 6v9M8 6v9M13 6v9" stroke="#222" stroke-width="1.4"/></svg>
<svg class="a" style="left:851px;top:134px" width="16" height="16" viewBox="0 0 16 16" ><path d="M2 14L8 2M7 14l6-12M5 14l6-12" stroke="#222" stroke-width="1.2"/></svg>
<div class="a" style="left:875px;top:130px;width:582px;height:24px;background:#383838"></div>
<svg class="a" style="left:876px;top:131px" width="8" height="22"><rect width="8" height="22" fill="#6b6b6b"/><rect x="2" y="3" width="1.3" height="1.3" fill="#000"/><rect x="4" y="3" width="1.3" height="1.3" fill="#000"/><rect x="5.4" y="3" width=".9" height="1.2" fill="#ddd"/><rect x="2" y="5" width="1.3" height="1.3" fill="#000"/><rect x="4" y="5" width="1.3" height="1.3" fill="#000"/><rect x="5.4" y="5" width=".9" height="1.2" fill="#ddd"/><rect x="2" y="7" width="1.3" height="1.3" fill="#000"/><rect x="4" y="7" width="1.3" height="1.3" fill="#000"/><rect x="5.4" y="7" width=".9" height="1.2" fill="#ddd"/><rect x="2" y="9" width="1.3" height="1.3" fill="#000"/><rect x="4" y="9" width="1.3" height="1.3" fill="#000"/><rect x="5.4" y="9" width=".9" height="1.2" fill="#ddd"/><rect x="2" y="11" width="1.3" height="1.3" fill="#000"/><rect x="4" y="11" width="1.3" height="1.3" fill="#000"/><rect x="5.4" y="11" width=".9" height="1.2" fill="#ddd"/><rect x="2" y="13" width="1.3" height="1.3" fill="#000"/><rect x="4" y="13" width="1.3" height="1.3" fill="#000"/><rect x="5.4" y="13" width=".9" height="1.2" fill="#ddd"/><rect x="2" y="15" width="1.3" height="1.3" fill="#000"/><rect x="4" y="15" width="1.3" height="1.3" fill="#000"/><rect x="5.4" y="15" width=".9" height="1.2" fill="#ddd"/><rect x="2" y="17" width="1.3" height="1.3" fill="#000"/><rect x="4" y="17" width="1.3" height="1.3" fill="#000"/><rect x="5.4" y="17" width=".9" height="1.2" fill="#ddd"/></svg>
<div class="a" style="left:884px;top:131px;width:572px;height:22px;background:#ebebeb;border-top:1px solid #fff;border-left:1px solid #fff"></div>
<svg class="a" style="left:886px;top:134px" width="16" height="16" viewBox="0 0 16 16" ><rect x="1.5" y="1.5" width="12" height="12" fill="#ddd" stroke="#333"/><path d="M5 1v8M3 3h8" stroke="#fff"/><rect x="4" y="10" width="8" height="4" fill="#2a5ab0"/></svg>
<svg class="a" style="left:909px;top:134px" width="16" height="16" viewBox="0 0 16 16" ><rect x="2.5" y="1.5" width="10" height="12" fill="#fff" stroke="#555"/><path d="M7 14l8-10" stroke="#c08030" stroke-width="2"/><path d="M1 12h8" stroke="#2a5ab0"/></svg>
<svg class="a" style="left:931px;top:134px" width="16" height="16" viewBox="0 0 16 16" ><path d="M1 6l7-3 7 3-7 3z" fill="#dde" stroke="#778"/><path d="M1 9l7 3 7-3M1 12l7 3 7-3" fill="none" stroke="#778"/></svg>
<svg class="a" style="left:953px;top:134px" width="16" height="16" viewBox="0 0 16 16" ><path d="M1 3h14M1 7h14M1 11h14M1 15h14M3 1v14M7 1v14M11 1v14M15 1v14" stroke="#e00000" stroke-width="1.2"/></svg>
<svg class="a" style="left:977px;top:134px" width="16" height="16" viewBox="0 0 16 16" ><path d="M4 1v9M12 1v9M1 3h14" stroke="#1a3a9a" stroke-width="1.2"/><circle cx="4" cy="12" r="2.5" fill="#fff" stroke="#1a3a9a" stroke-width="1.2"/><circle cx="12" cy="12" r="2.5" fill="#fff" stroke="#1a3a9a" stroke-width="1.2"/></svg>
<svg class="a" style="left:1001px;top:134px" width="16" height="16" viewBox="0 0 16 16" ><path d="M4 1v9M1 3h10" stroke="#1a3a9a" stroke-width="1.2"/><path d="M8 12h8" stroke="#1a3a9a" stroke-dasharray="1 1"/><circle cx="4" cy="12" r="2.5" fill="#fff" stroke="#1a3a9a" stroke-width="1.2"/></svg>
<svg class="a" style="left:1022px;top:134px" width="16" height="16" viewBox="0 0 16 16" ><path d="M8 1v14M1 8h14" stroke="#e04040"/><rect x="5.5" y="5.5" width="5" height="5" fill="#fff" stroke="#1a3a9a" stroke-width="1.3"/></svg>
<svg class="a" style="left:1045px;top:134px" width="16" height="16" viewBox="0 0 16 16" ><path d="M1 4h14M1 12h14" stroke="#1a3a9a" stroke-width="1.3"/><path d="M1 8h14" stroke="#e04040" stroke-dasharray="2 1"/></svg>
<svg class="a" style="left:1068px;top:134px" width="16" height="16" viewBox="0 0 16 16" ><path d="M1 8h9v4h5" stroke="#1a3a9a" stroke-width="2" fill="none"/><path d="M5 2v4M11 2v4M3 4h4M9 4h4" stroke="#e00"/></svg>
<svg class="a" style="left:1091px;top:134px" width="16" height="16" viewBox="0 0 16 16" ><path d="M1 15l14-14" stroke="#222"/><path d="M2 9v6h2M12 9v6h2" stroke="#1a3a9a" stroke-width="1.3" fill="none"/></svg>
<svg class="a" style="left:1114px;top:134px" width="16" height="16" viewBox="0 0 16 16" ><rect x="1.5" y="1.5" width="13" height="13" fill="#fff" stroke="#2a8a3a" stroke-width="1.3"/><path d="M8 1v14" stroke="#2a8a3a" stroke-width="1.3"/></svg>
<svg class="a" style="left:1138px;top:134px" width="16" height="16" viewBox="0 0 16 16" ><rect x="2" y="1" width="12" height="9" fill="#d02020"/><text x="3" y="9" font-size="8" fill="#fff" font-family="Liberation Sans" font-weight="bold">m²</text><rect x="1" y="12" width="14" height="3" fill="#2a7ac0"/></svg>
<svg class="a" style="left:1161px;top:134px" width="16" height="16" viewBox="0 0 16 16" ><rect x="1.5" y="1.5" width="10" height="13" fill="#fff" stroke="#222" stroke-dasharray="1 1"/><rect x="4" y="3" width="11" height="9" fill="#d02020"/><text x="5" y="10" font-size="8" fill="#fff" font-family="Liberation Sans" font-weight="bold">m²</text></svg>
<svg class="a" style="left:1183px;top:134px" width="16" height="16" viewBox="0 0 16 16" ><rect x="1.5" y="1.5" width="13" height="13" fill="#a8c8e8" stroke="#2a6ab0"/><path d="M5.5 1.5v13M10.5 1.5v13" stroke="#2a6ab0"/></svg>
<svg class="a" style="left:1207px;top:134px" width="16" height="16" viewBox="0 0 16 16" ><path d="M1.5 15V1.5h13V15M4.5 15V4.5h7V15" fill="#a8c8e8" stroke="#2a6ab0"/></svg>
<svg class="a" style="left:1229px;top:134px" width="16" height="16" viewBox="0 0 16 16" ><path d="M1.5 15V1.5h13V15M5.5 15V6.5h5V15" fill="#a8c8e8" stroke="#2a6ab0" stroke-width="1.2"/></svg>
<svg class="a" style="left:1253px;top:134px" width="16" height="16" viewBox="0 0 16 16" ><rect x="1.5" y="7.5" width="13" height="7" fill="#f8e080" stroke="#d02020" stroke-width="1.3"/><rect x="5.5" y="2.5" width="5" height="6" fill="#f8e080" stroke="#d02020" stroke-width="1.3"/><path d="M4 11h8" stroke="#2a6ab0"/></svg>
<svg class="a" style="left:1276px;top:134px" width="16" height="16" viewBox="0 0 16 16" ><path d="M1 13h14" stroke="#2a6ab0" stroke-dasharray="2 1"/><circle cx="3" cy="13" r="1.5" fill="#2a6ab0"/><circle cx="13" cy="13" r="1.5" fill="#2a6ab0"/><path d="M6 11l8-9 1 1-8 9z" fill="#f0a030" stroke="#666" stroke-width=".7"/></svg>
<svg class="a" style="left:1298px;top:134px" width="16" height="16" viewBox="0 0 16 16" ><path d="M1 3l6 2v10l-6-2zM15 3l-6 2v10l6-2z" fill="#fff" stroke="#702060"/><path d="M5 2l4 1v10l-4-1z" fill="#eee" stroke="#555"/></svg>
<svg class="a" style="left:1322px;top:134px" width="16" height="16" viewBox="0 0 16 16" ><rect x="1" y="2" width="14" height="12" fill="#2a6ab0"/><rect x="7" y="4" width="7" height="6" fill="#f0a060"/><rect x="2" y="10" width="8" height="3" fill="#8ac0f0"/></svg>
<svg class="a" style="left:1344px;top:134px" width="16" height="16" viewBox="0 0 16 16" ><text x="2" y="7" font-size="7" font-family="Liberation Sans">±00</text><path d="M1 9h14M4 9l4 5 4-5M5 15h6" stroke="#222" fill="none"/></svg>
<svg class="a" style="left:1368px;top:134px" width="16" height="16" viewBox="0 0 16 16" ><path d="M3 2v13M3 3h10M3 6h8M3 9h10M3 12h8" stroke="#222" stroke-width="1.3"/></svg>
<svg class="a" style="left:1390px;top:134px" width="16" height="16" viewBox="0 0 16 16" ><text x="5" y="12" font-size="13" font-family="Liberation Sans">A</text><path d="M1 14h14M1 14l2-2M1 14l2 2" stroke="#222"/></svg>
<svg class="a" style="left:1414px;top:134px" width="16" height="16" viewBox="0 0 16 16" ><circle cx="8" cy="8" r="6.5" fill="#fff" stroke="#222" stroke-width="1.3"/><path d="M8 1v14M1 8h14" stroke="#222"/><circle cx="8" cy="8" r="2" fill="none" stroke="#222"/></svg>
<svg class="a" style="left:1436px;top:134px" width="16" height="16" viewBox="0 0 16 16" ><circle cx="8" cy="8" r="7" fill="#2a70e0"/><circle cx="8" cy="6" r="5" fill="#5a9af0"/><text x="8" y="12.5" font-size="11" fill="#fff" text-anchor="middle" font-weight="bold" font-family="Liberation Sans">?</text></svg>
<div class="a" style="left:0;top:160px;width:88px;height:22px;background:#a5a5a5;border-top-right-radius:4px"></div>
<svg class="a" style="left:2px;top:163px" width="6" height="13"><rect x="1" y="0" width="1.3" height="1.3" fill="#000"/><rect x="3" y="0" width="1.3" height="1.3" fill="#000"/><rect x="4.4" y="0" width=".9" height="1.2" fill="#ddd"/><rect x="1" y="2" width="1.3" height="1.3" fill="#000"/><rect x="3" y="2" width="1.3" height="1.3" fill="#000"/><rect x="4.4" y="2" width=".9" height="1.2" fill="#ddd"/><rect x="1" y="4" width="1.3" height="1.3" fill="#000"/><rect x="3" y="4" width="1.3" height="1.3" fill="#000"/><rect x="4.4" y="4" width=".9" height="1.2" fill="#ddd"/><rect x="1" y="6" width="1.3" height="1.3" fill="#000"/><rect x="3" y="6" width="1.3" height="1.3" fill="#000"/><rect x="4.4" y="6" width=".9" height="1.2" fill="#ddd"/><rect x="1" y="8" width="1.3" height="1.3" fill="#000"/><rect x="3" y="8" width="1.3" height="1.3" fill="#000"/><rect x="4.4" y="8" width=".9" height="1.2" fill="#ddd"/><rect x="1" y="10" width="1.3" height="1.3" fill="#000"/><rect x="3" y="10" width="1.3" height="1.3" fill="#000"/><rect x="4.4" y="10" width=".9" height="1.2" fill="#ddd"/></svg>
<div class="a t" style="left:12px;top:165px;font-size:13px;color:#1a1a2a">T20...</div>
<div class="a" style="left:0;top:182px;width:88px;height:803px;background:#f0f0f0;border-top-right-radius:4px"></div>
<svg class="a" style="left:8px;top:194px" width="7" height="9"><path d="M0 0l6 4.5L0 9z" fill="#3a64a0"/></svg>
<div class="a t" style="left:28px;top:192px;font-size:12px;-webkit-text-stroke:.2px #000">设</div>
<div class="a t" style="left:64px;top:192px;font-size:12px;-webkit-text-stroke:.2px #000">置</div>
<svg class="a" style="left:8px;top:211px" width="7" height="9"><path d="M0 0l6 4.5L0 9z" fill="#3a64a0"/></svg>
<div class="a t" style="left:28px;top:209px;font-size:12px;-webkit-text-stroke:.2px #000">轴网柱子</div>
<svg class="a" style="left:8px;top:229px" width="7" height="9"><path d="M0 0l6 4.5L0 9z" fill="#3a64a0"/></svg>
<div class="a t" style="left:28px;top:227px;font-size:12px;-webkit-text-stroke:.2px #000">墙</div>
<div class="a t" style="left:64px;top:227px;font-size:12px;-webkit-text-stroke:.2px #000">体</div>
<svg class="a" style="left:8px;top:247px" width="7" height="9"><path d="M0 0l6 4.5L0 9z" fill="#3a64a0"/></svg>
<div class="a t" style="left:28px;top:245px;font-size:12px;-webkit-text-stroke:.2px #000">门</div>
<div class="a t" style="left:64px;top:245px;font-size:12px;-webkit-text-stroke:.2px #000">窗</div>
<svg class="a" style="left:5px;top:268px" width="10" height="6"><path d="M0 0h9l-4.5 5z" fill="#3a64a0"/></svg>
<div class="a t" style="left:28px;top:264px;font-size:12px;-webkit-text-stroke:.2px #000">房间屋顶</div>
<div class="a" style="left:0px;top:279px;width:88px;height:1px;background:#a0a0a0"></div>
<div class="a" style="left:0px;top:280px;width:88px;height:169px;background:#ececea"></div>
<svg class="a" style="left:3px;top:283px" width="16" height="16" viewBox="0 0 16 16" ><rect x="1.5" y="4.5" width="13" height="10" fill="#a8c8e8" stroke="#2a5a9a"/><rect x="4" y="1.5" width="5" height="5" fill="#f0e0a0" stroke="#2a5a9a"/><circle cx="10" cy="11" r="3" fill="#dfeffa" stroke="#333" stroke-width="1.2"/><path d="M12 13l3 2" stroke="#c05020" stroke-width="1.5"/></svg>
<div class="a t" style="left:28px;top:285px;font-size:12px;-webkit-text-stroke:.2px #000">搜索房间</div>
<svg class="a" style="left:3px;top:301px" width="16" height="16" viewBox="0 0 16 16" ><path d="M1 15V7h3V2h8v5h3v8z" fill="#111"/><path d="M2 14V8h3V3h6v5h3v6z" fill="#e02020"/><path d="M3.5 12.5v-3h3v-5h3v5h3v3z" fill="#fff"/></svg>
<div class="a t" style="left:28px;top:303px;font-size:12px;-webkit-text-stroke:.2px #000">房间轮廓</div>
<svg class="a" style="left:3px;top:319px" width="16" height="16" viewBox="0 0 16 16" ><rect x="1" y="1" width="14" height="14" fill="#f4f4f8" stroke="#aab"/><rect x="1" y="1" width="14" height="2" fill="#6a8ad0"/><path d="M4 4v10M11 4v10" stroke="#2030c0" stroke-width="2" stroke-dasharray="2 1"/><path d="M3 6h2M3 10h2M10 8h2M10 12h2" stroke="#e02020" stroke-width="1.5"/></svg>
<div class="a t" style="left:28px;top:321px;font-size:12px;-webkit-text-stroke:.2px #000">房间排序</div>
<svg class="a" style="left:3px;top:337px" width="16" height="16" viewBox="0 0 16 16" ><rect x="1" y="1" width="14" height="10" fill="#d02020"/><text x="2.5" y="9" font-size="8" fill="#fff" font-weight="bold" font-family="Liberation Sans">m²</text><rect x="0" y="12" width="16" height="3" fill="#3a7ac0"/></svg>
<div class="a t" style="left:28px;top:339px;font-size:12px;-webkit-text-stroke:.2px #000">查询面积</div>
<svg class="a" style="left:3px;top:355px" width="16" height="16" viewBox="0 0 16 16" ><rect x="1.5" y="1.5" width="12" height="12" fill="#3a6ab0" stroke="#2a5a9a"/><rect x="4" y="3" width="11" height="9" fill="#d02020"/><text x="5" y="10" font-size="8" fill="#fff" font-weight="bold" font-family="Liberation Sans">m²</text></svg>
<div class="a t" style="left:28px;top:357px;font-size:12px;-webkit-text-stroke:.2px #000">套内面积</div>
<svg class="a" style="left:3px;top:373px" width="16" height="16" viewBox="0 0 16 16" ><path d="M1 15h14M2 15V9h12v6M4 9v6M7 9v6M10 9v6" stroke="#222"/><rect x="5" y="1" width="10" height="8" fill="#d02020"/><text x="6" y="8" font-size="7" fill="#fff" font-weight="bold" font-family="Liberation Sans">m²</text></svg>
<div class="a t" style="left:28px;top:375px;font-size:12px;-webkit-text-stroke:.2px #000">公摊面积</div>
<svg class="a" style="left:3px;top:391px" width="16" height="16" viewBox="0 0 16 16" ><path d="M1 5l4-4 5 2v4" fill="#2a5a9a" stroke="#222"/><rect x="1.5" y="6.5" width="6" height="8" fill="#fff" stroke="#222"/><rect x="5" y="6" width="11" height="9" fill="#d02020"/><text x="6" y="13" font-size="7" fill="#fff" font-weight="bold" font-family="Liberation Sans">m²</text></svg>
<div class="a t" style="left:28px;top:393px;font-size:12px;-webkit-text-stroke:.2px #000">面积计算</div>
<svg class="a" style="left:3px;top:409px" width="16" height="16" viewBox="0 0 16 16" ><rect x="1.5" y="1.5" width="11" height="13" fill="#fff" stroke="#222" stroke-dasharray="1 1"/><rect x="4" y="3" width="11" height="9" fill="#d02020"/><text x="5" y="10" font-size="8" fill="#fff" font-weight="bold" font-family="Liberation Sans">m²</text></svg>
<div class="a t" style="left:28px;top:411px;font-size:12px;-webkit-text-stroke:.2px #000">面积统计</div>
<svg class="a" style="left:8px;top:432px" width="7" height="9"><path d="M0 0l6 4.5L0 9z" fill="#1a7a8a"/></svg>
<div class="a t" style="left:28px;top:430px;font-size:12px;-webkit-text-stroke:.2px #000">房间布置</div>
<div class="a" style="left:2px;top:448px;width:86px;height:1px;background:#b0b0b0"></div>
<div class="a" style="left:0px;top:449px;width:88px;height:96px;background:#ececea"></div>
<svg class="a" style="left:3px;top:452px" width="16" height="16" viewBox="0 0 16 16" ><rect x="1" y="1" width="14" height="14" fill="#e02020"/><rect x="2.5" y="2.5" width="11" height="9" fill="#6a9ad0"/><circle cx="10" cy="10" r="3" fill="#dfeffa" stroke="#333"/><path d="M12 12l3 3" stroke="#333" stroke-width="1.5"/></svg>
<div class="a t" style="left:28px;top:454px;font-size:12px;-webkit-text-stroke:.2px #000">搜屋顶线</div>
<svg class="a" style="left:3px;top:470px" width="16" height="16" viewBox="0 0 16 16" ><rect x="1" y="1" width="14" height="14" fill="#e02020"/><rect x="2" y="2" width="12" height="12" fill="#b8b820"/><path d="M2 2l5 5h2l5-5M7 7v7M9 7v7" stroke="#ffff80" stroke-width="1.2" fill="none"/><path d="M7 7h2v7H7z" fill="#fff090"/></svg>
<div class="a t" style="left:28px;top:472px;font-size:12px;-webkit-text-stroke:.2px #000">任意坡顶</div>
<svg class="a" style="left:3px;top:488px" width="16" height="16" viewBox="0 0 16 16" ><rect x="1" y="2" width="14" height="12" fill="#e02020"/><rect x="2" y="3" width="12" height="10" fill="#f0e040"/><rect x="2" y="3" width="12" height="4" fill="#a09010"/></svg>
<div class="a t" style="left:28px;top:490px;font-size:12px;-webkit-text-stroke:.2px #000">人字坡顶</div>
<svg class="a" style="left:3px;top:506px" width="16" height="16" viewBox="0 0 16 16" ><path d="M4 1h8l4 7-4 7H4L0 8z" fill="#f0e040" stroke="#e02020"/><path d="M8 1v14M1 8h14M4 1l8 14M12 1L4 15" stroke="#c0b020" stroke-width=".8"/></svg>
<div class="a t" style="left:28px;top:508px;font-size:12px;-webkit-text-stroke:.2px #000">攒尖屋顶</div>
<svg class="a" style="left:3px;top:524px" width="16" height="16" viewBox="0 0 16 16" ><rect x="1" y="2" width="14" height="12" fill="#e02020"/><rect x="2" y="3" width="12" height="10" fill="#f0e040"/><path d="M2 3l6 5 6-5" fill="#a09010"/></svg>
<div class="a t" style="left:28px;top:526px;font-size:12px;-webkit-text-stroke:.2px #000">矩形屋顶</div>
<div class="a" style="left:2px;top:544px;width:86px;height:1px;background:#b8b8b8"></div>
<div class="a" style="left:0px;top:545px;width:88px;height:40px;background:#ececea"></div>
<svg class="a" style="left:3px;top:548px" width="16" height="16" viewBox="0 0 16 16" ><path d="M1 14V6l6-5 7 4v9z" fill="#888" stroke="#333"/><path d="M4 8l6-5 6 5v7H4z" fill="#fff" stroke="#222"/><rect x="8" y="9" width="5" height="5" fill="#3a6ab0"/></svg>
<div class="a t" style="left:28px;top:550px;font-size:12px;-webkit-text-stroke:.2px #000">加老虎窗</div>
<svg class="a" style="left:3px;top:566px" width="16" height="16" viewBox="0 0 16 16" ><rect x="0" y="2" width="7" height="5" fill="#3a80d0"/><rect x="9" y="2" width="7" height="5" fill="#3a80d0"/><path d="M8 0v11" stroke="#3a80d0" stroke-width="2.5"/><path d="M8 10l3 3-3 3-3-3z" fill="#fff" stroke="#3a80d0"/></svg>
<div class="a t" style="left:28px;top:568px;font-size:12px;-webkit-text-stroke:.2px #000">加雨水管</div>
<div class="a" style="left:2px;top:585px;width:86px;height:1px;background:#d8d8d8"></div>
<svg class="a" style="left:8px;top:592px" width="7" height="9"><path d="M0 0l6 4.5L0 9z" fill="#3a64a0"/></svg>
<div class="a t" style="left:28px;top:590px;font-size:12px;-webkit-text-stroke:.2px #000">楼梯其他</div>
<svg class="a" style="left:8px;top:610px" width="7" height="9"><path d="M0 0l6 4.5L0 9z" fill="#3a64a0"/></svg>
<div class="a t" style="left:28px;top:608px;font-size:12px;-webkit-text-stroke:.2px #000">立</div>
<div class="a t" style="left:64px;top:608px;font-size:12px;-webkit-text-stroke:.2px #000">面</div>
<svg class="a" style="left:8px;top:628px" width="7" height="9"><path d="M0 0l6 4.5L0 9z" fill="#3a64a0"/></svg>
<div class="a t" style="left:28px;top:626px;font-size:12px;-webkit-text-stroke:.2px #000">剖</div>
<div class="a t" style="left:64px;top:626px;font-size:12px;-webkit-text-stroke:.2px #000">面</div>
<svg class="a" style="left:8px;top:646px" width="7" height="9"><path d="M0 0l6 4.5L0 9z" fill="#3a64a0"/></svg>
<div class="a t" style="left:28px;top:644px;font-size:12px;-webkit-text-stroke:.2px #000">文字表格</div>
<svg class="a" style="left:8px;top:664px" width="7" height="9"><path d="M0 0l6 4.5L0 9z" fill="#3a64a0"/></svg>
<div class="a t" style="left:28px;top:662px;font-size:12px;-webkit-text-stroke:.2px #000">尺寸标注</div>
<svg class="a" style="left:8px;top:682px" width="7" height="9"><path d="M0 0l6 4.5L0 9z" fill="#3a64a0"/></svg>
<div class="a t" style="left:28px;top:680px;font-size:12px;-webkit-text-stroke:.2px #000">符号标注</div>
<svg class="a" style="left:8px;top:700px" width="7" height="9"><path d="M0 0l6 4.5L0 9z" fill="#3a64a0"/></svg>
<div class="a t" style="left:28px;top:698px;font-size:12px;-webkit-text-stroke:.2px #000">图层控制</div>
<svg class="a" style="left:8px;top:718px" width="7" height="9"><path d="M0 0l6 4.5L0 9z" fill="#3a64a0"/></svg>
<div class="a t" style="left:28px;top:716px;font-size:12px;-webkit-text-stroke:.2px #000">工</div>
<div class="a t" style="left:64px;top:716px;font-size:12px;-webkit-text-stroke:.2px #000">具</div>
<svg class="a" style="left:8px;top:736px" width="7" height="9"><path d="M0 0l6 4.5L0 9z" fill="#3a64a0"/></svg>
<div class="a t" style="left:28px;top:734px;font-size:12px;-webkit-text-stroke:.2px #000">三维建模</div>
<svg class="a" style="left:8px;top:754px" width="7" height="9"><path d="M0 0l6 4.5L0 9z" fill="#3a64a0"/></svg>
<div class="a t" style="left:28px;top:752px;font-size:12px;-webkit-text-stroke:.2px #000">图块图案</div>
<svg class="a" style="left:8px;top:772px" width="7" height="9"><path d="M0 0l6 4.5L0 9z" fill="#3a64a0"/></svg>
<div class="a t" style="left:28px;top:770px;font-size:12px;-webkit-text-stroke:.2px #000">场地布置</div>
<svg class="a" style="left:8px;top:790px" width="7" height="9"><path d="M0 0l6 4.5L0 9z" fill="#3a64a0"/></svg>
<div class="a t" style="left:28px;top:788px;font-size:12px;-webkit-text-stroke:.2px #000">文件布图</div>
<svg class="a" style="left:8px;top:808px" width="7" height="9"><path d="M0 0l6 4.5L0 9z" fill="#3a64a0"/></svg>
<div class="a t" style="left:28px;top:806px;font-size:12px;-webkit-text-stroke:.2px #000">其</div>
<div class="a t" style="left:64px;top:806px;font-size:12px;-webkit-text-stroke:.2px #000">它</div>
<svg class="a" style="left:8px;top:826px" width="7" height="9"><path d="M0 0l6 4.5L0 9z" fill="#3a64a0"/></svg>
<div class="a t" style="left:28px;top:824px;font-size:12px;-webkit-text-stroke:.2px #000">数据中心</div>
<svg class="a" style="left:8px;top:844px" width="7" height="9"><path d="M0 0l6 4.5L0 9z" fill="#3a64a0"/></svg>
<div class="a t" style="left:28px;top:842px;font-size:12px;-webkit-text-stroke:.2px #000">帮助演示</div>
<div class="a" style="left:92px;top:178px;width:2px;height:700px;background:#9a9a9a"></div>
<div class="a" style="left:92px;top:158px;width:1528px;height:18px;background:#f0f0f0"></div>
<div class="a" style="left:92px;top:158px;width:215px;height:18px;background:#f0f0f0;border-top:1px solid #fff;border-left:1px solid #fff;border-right:1px solid #6a6a6a;border-bottom:1px solid #6a6a6a"></div>
<div class="a t" style="left:102px;top:162px;font-size:12px;color:#111">紫荆城一˜三期地下室平面<span style="font-family:Liberation Mono;letter-spacing:-1.20px">2021.01.10</span></div>
<div class="a" style="left:310px;top:158px;width:65px;height:18px;background:#f0f0f0;border-top:1px solid #fff;border-left:1px solid #fff;border-right:1px solid #6a6a6a;border-bottom:1px solid #6a6a6a"></div>
<div class="a t" style="left:320px;top:162px;font-size:12px;color:#111">口部大样</div>
<div class="a" style="left:378px;top:158px;width:185px;height:18px;background:#fce6e8;border-top:1px solid #fff;border-left:1px solid #fff;border-right:1px solid #6a6a6a;border-bottom:1px solid #6a6a6a"></div>
<div class="a t" style="left:388px;top:162px;font-size:12px;color:#1010ff">观澜尊府标准层户型<span style="font-family:Liberation Mono;letter-spacing:-1.20px">2021.04.25</span></div>
<div class="a" style="left:565px;top:158px;width:156px;height:18px;background:#f0f0f0;border-top:1px solid #fff;border-left:1px solid #fff;border-right:1px solid #6a6a6a;border-bottom:1px solid #6a6a6a"></div>
<div class="a t" style="left:575px;top:162px;font-size:12px;color:#111"><span style="font-family:Liberation Mono;letter-spacing:-1.20px">JZ5#-8#</span>地下室人防施工图</div>
<div class="a" style="left:724px;top:158px;width:269px;height:18px;background:#f0f0f0;border-top:1px solid #fff;border-left:1px solid #fff;border-right:1px solid #6a6a6a;border-bottom:1px solid #6a6a6a"></div>
<div class="a t" style="left:734px;top:162px;font-size:12px;color:#111"><span style="font-family:Liberation Mono;letter-spacing:-1.20px">RF-01</span>、<span style="font-family:Liberation Mono;letter-spacing:-1.20px">06</span>˜<span style="font-family:Liberation Mono;letter-spacing:-1.20px">10</span>、<span style="font-family:Liberation Mono;letter-spacing:-1.20px">13</span>（大样及说明）<span style="font-family:Liberation Mono;letter-spacing:-1.20px">2020-02-27t8</span></div>
<div class="a" style="left:995px;top:158px;width:154px;height:18px;background:#f0f0f0;border-top:1px solid #fff;border-left:1px solid #fff;border-right:1px solid #6a6a6a;border-bottom:1px solid #6a6a6a"></div>
<div class="a t" style="left:1005px;top:162px;font-size:12px;color:#111"><span style="font-family:Liberation Mono;letter-spacing:-1.20px">JZ5#-8#</span>地下室施工图<span style="font-family:Liberation Mono;letter-spacing:-1.20px">.dwg</span></div>
<div class="a" style="left:92px;top:176px;width:1528px;height:1px;background:#3a3a3a"></div>
<div class="a" style="left:92px;top:177px;width:1528px;height:2px;background:#7a7a7a"></div>
<div class="a" style="left:94px;top:179px;width:1524px;height:699px;background:#000"></div>
<div class="a" style="left:1618px;top:158px;width:2px;height:737px;background:#f8f8f8"></div>
<div class="a t" style="left:97px;top:186px;font-size:12px;color:#d8d8d8;letter-spacing:.9px">[-][俯视][二维线框]</div>
<svg class="a" style="left:0;top:0" width="1680" height="1018">
<path d="M626.5 390.5H928.5V584.5H820.5V698.5H740.5V584.5H626.5Z" fill="none" stroke="#00ffff" stroke-width="1"/>
<path d="M920.5 179V878M94 722.5H1618" stroke="#fff" stroke-width="1"/>
<rect x="914.5" y="716.5" width="12" height="12" fill="none" stroke="#fff"/>
<path d="M111.5 810V860.5H162" fill="none" stroke="#fff"/>
<rect x="107.5" y="855.5" width="9" height="9" fill="none" stroke="#fff"/>
<path d="M113 793l6.5 6.5 6.5-6.5M119.5 799.5v7M166 846l13 13M179 846l-13 13" fill="none" stroke="#fff"/>
</svg>
<svg class="a" style="left:1460px;top:185px" width="150" height="185">
<circle cx="76" cy="75" r="52.5" fill="none" stroke="#2d2d2d" stroke-width="13"/>
<rect x="51" y="50" width="50" height="50" fill="#a6a6a6"/>
<rect x="60" y="59" width="32" height="32" fill="#9b9ca2"/>
<text x="76" y="83" font-size="24" fill="#55565c" text-anchor="middle" font-family="Liberation Sans">上</text>
<rect x="53" y="162" width="46" height="15" rx="3" fill="#8a8a92" stroke="#6a6a72"/>
<text x="58" y="174" font-size="10.5" fill="#4e4e56" font-family="Liberation Sans">WCS</text>
<path d="M87 168h7l-3.5 4z" fill="#a8a8b0"/>
</svg>
<div class="a t" style="left:1527px;top:197px;font-size:18px;color:#b4b4b4">北</div>
<div class="a t" style="left:1527px;top:308px;font-size:18px;color:#b4b4b4">南</div>
<div class="a t" style="left:1472px;top:251px;font-size:18px;color:#b4b4b4">西</div>
<div class="a t" style="left:1582px;top:251px;font-size:18px;color:#b4b4b4">东</div>
<div class="a" style="left:1624px;top:158px;width:25px;height:405px;background:#383838"></div>
<svg class="a" style="left:1625px;top:159px" width="23" height="8"><rect width="23" height="8" fill="#6b6b6b"/><rect x="4" y="2" width="1.3" height="1.3" fill="#000"/><rect x="4" y="4" width="1.3" height="1.3" fill="#000"/><rect x="4" y="5.4" width="1.2" height=".9" fill="#ddd"/><rect x="6" y="2" width="1.3" height="1.3" fill="#000"/><rect x="6" y="4" width="1.3" height="1.3" fill="#000"/><rect x="6" y="5.4" width="1.2" height=".9" fill="#ddd"/><rect x="8" y="2" width="1.3" height="1.3" fill="#000"/><rect x="8" y="4" width="1.3" height="1.3" fill="#000"/><rect x="8" y="5.4" width="1.2" height=".9" fill="#ddd"/><rect x="10" y="2" width="1.3" height="1.3" fill="#000"/><rect x="10" y="4" width="1.3" height="1.3" fill="#000"/><rect x="10" y="5.4" width="1.2" height=".9" fill="#ddd"/><rect x="12" y="2" width="1.3" height="1.3" fill="#000"/><rect x="12" y="4" width="1.3" height="1.3" fill="#000"/><rect x="12" y="5.4" width="1.2" height=".9" fill="#ddd"/><rect x="14" y="2" width="1.3" height="1.3" fill="#000"/><rect x="14" y="4" width="1.3" height="1.3" fill="#000"/><rect x="14" y="5.4" width="1.2" height=".9" fill="#ddd"/><rect x="16" y="2" width="1.3" height="1.3" fill="#000"/><rect x="16" y="4" width="1.3" height="1.3" fill="#000"/><rect x="16" y="5.4" width="1.2" height=".9" fill="#ddd"/></svg>
<div class="a" style="left:1625px;top:167px;width:23px;height:395px;background:#ebebeb;border-top:1px solid #fff;border-left:1px solid #fff"></div>
<svg class="a" style="left:1628px;top:170px" width="16" height="16" viewBox="0 0 16 16" ><path d="M3 12l9-10 3 3-9 10z" fill="#d8c090" stroke="#555" stroke-width=".8"/><path d="M3 12l3 3-3 0z" fill="#d04010"/><path d="M1 15h14" stroke="#333"/></svg>
<svg class="a" style="left:1628px;top:192px" width="16" height="16" viewBox="0 0 16 16" ><circle cx="5" cy="5" r="3.5" fill="#fff" stroke="#333"/><circle cx="10" cy="11" r="3.5" fill="#cfe4f8" stroke="#2a70c0" stroke-width="1.3"/><circle cx="12" cy="13" r="2.5" fill="#cfe4f8" stroke="#2a70c0"/><path d="M10 2h4v3" fill="none" stroke="#222"/></svg>
<svg class="a" style="left:1628px;top:214px" width="16" height="16" viewBox="0 0 16 16" ><path d="M8 1v15" stroke="#222" stroke-width="1.2"/><path d="M6 13H1l5-9z" fill="#fff" stroke="#222"/><path d="M10 13h5l-5-9z" fill="#a8d0f0" stroke="#2a70c0"/></svg>
<svg class="a" style="left:1628px;top:236px" width="16" height="16" viewBox="0 0 16 16" ><path d="M2 12c0-4 2-5 4-5V4c0-3 5-3 5 0v3c3 0 4 2 4 5z" fill="#fff" stroke="#222"/><path d="M4 12c0-3 1-3 3-3V5c0-2 3-2 3 0v4c2 0 3 1 3 3" fill="none" stroke="#2a70c0" stroke-width="1.3"/></svg>
<svg class="a" style="left:1628px;top:258px" width="16" height="16" viewBox="0 0 16 16" ><rect x="1.5" y="1.5" width="5" height="5" fill="#fff" stroke="#2a70c0"/><rect x="9.5" y="1.5" width="5" height="5" fill="#cfe4f8" stroke="#2a70c0"/><rect x="1.5" y="9.5" width="5" height="5" fill="#cfe4f8" stroke="#2a70c0"/><rect x="9.5" y="9.5" width="5" height="5" fill="#fff" stroke="#2a70c0"/><path d="M11 15l4-4v4z" fill="#111"/></svg>
<svg class="a" style="left:1628px;top:280px" width="16" height="16" viewBox="0 0 16 16" ><path d="M8 1l2.5 3h-5zM8 15l2.5-3h-5zM1 8l3-2.5v5zM15 8l-3-2.5v5z" fill="#222"/><rect x="6" y="6" width="4" height="4" fill="#fff" stroke="#222"/></svg>
<svg class="a" style="left:1628px;top:302px" width="16" height="16" viewBox="0 0 16 16" ><path d="M12.5 5A6 6 0 108 14a6 6 0 005-3" fill="none" stroke="#333" stroke-width="1.3"/><path d="M9 1l4 4-5 1z" fill="#222"/></svg>
<svg class="a" style="left:1628px;top:324px" width="16" height="16" viewBox="0 0 16 16" ><rect x="5.5" y="1.5" width="10" height="11" fill="#cfe4f8" stroke="#2a70c0" stroke-width="1.3"/><rect x="1.5" y="8.5" width="6" height="6" fill="#fff" stroke="#222"/></svg>
<svg class="a" style="left:1628px;top:346px" width="16" height="16" viewBox="0 0 16 16" ><path d="M1.5 1.5h9l4 13h-13z" fill="#fff" stroke="#222"/><path d="M10.5 1.5l4 13" stroke="#2a70c0" stroke-width="1.3"/><path d="M5 9h5M8 7l2 2-2 2" stroke="#111" stroke-width="1.3" fill="none"/></svg>
<svg class="a" style="left:1628px;top:368px" width="16" height="16" viewBox="0 0 16 16" ><path d="M1 8h4M8 8h7" stroke="#2a70c0" stroke-width="1.3" stroke-dasharray="2 1"/><path d="M5 13l5-10" stroke="#2a70c0" stroke-width="1.3"/></svg>
<svg class="a" style="left:1628px;top:390px" width="16" height="16" viewBox="0 0 16 16" ><path d="M1 8h8" stroke="#111" stroke-dasharray="2 1"/><path d="M10 13l5-10" stroke="#2a70c0" stroke-width="1.3"/></svg>
<svg class="a" style="left:1628px;top:412px" width="16" height="16" viewBox="0 0 16 16" ><rect x="1.5" y="5.5" width="13" height="8" rx="1" fill="#fff" stroke="#222"/><rect x="11" y="3" width="4" height="4" fill="#2a70c0"/></svg>
<svg class="a" style="left:1628px;top:434px" width="16" height="16" viewBox="0 0 16 16" ><rect x="1.5" y="5.5" width="13" height="8" rx="1" fill="#fff" stroke="#222"/><rect x="3" y="3" width="3" height="4" fill="#2a70c0"/><rect x="10" y="3" width="3" height="4" fill="#2a70c0"/></svg>
<svg class="a" style="left:1628px;top:456px" width="16" height="16" viewBox="0 0 16 16" ><path d="M1 8h14" stroke="#2a70c0" stroke-width="1.3"/><path d="M4 5l3 3-3 3M12 5l-3 3 3 3" fill="#2a70c0" stroke="#2a70c0"/></svg>
<svg class="a" style="left:1628px;top:478px" width="16" height="16" viewBox="0 0 16 16" ><path d="M1.5 14.5v-7l7-6h6v13z" fill="#fff" stroke="#222"/><path d="M1.5 7.5l7-6" stroke="#2a70c0" stroke-width="1.3"/></svg>
<svg class="a" style="left:1628px;top:500px" width="16" height="16" viewBox="0 0 16 16" ><path d="M1.5 14.5v-6a7 7 0 017-7h6v13z" fill="#fff" stroke="#222"/><path d="M1.5 8.5a7 7 0 017-7" fill="none" stroke="#2a70c0" stroke-width="1.3"/></svg>
<svg class="a" style="left:1628px;top:522px" width="16" height="16" viewBox="0 0 16 16" ><path d="M2 14l2-4M12 2l2-2" stroke="#222"/><path d="M3 11c2-6 4 2 6-2s2-6 4-6" fill="none" stroke="#2a70c0" stroke-width="1.3"/><circle cx="3" cy="11" r="1.3" fill="#fff" stroke="#222"/><circle cx="13" cy="3" r="1.3" fill="#fff" stroke="#222"/></svg>
<svg class="a" style="left:1628px;top:544px" width="16" height="16" viewBox="0 0 16 16" ><path d="M2 6l5-3 7 3v6l-7 3-5-3z" fill="#cfe4f8" stroke="#2a70c0" stroke-width="1.2"/><path d="M7 3v12M2 6l5 3 7-3" stroke="#2a70c0" fill="none"/></svg>
<div class="a" style="left:1624px;top:565px;width:25px;height:145px;background:#383838"></div>
<svg class="a" style="left:1625px;top:566px" width="23" height="8"><rect width="23" height="8" fill="#6b6b6b"/><rect x="4" y="2" width="1.3" height="1.3" fill="#000"/><rect x="4" y="4" width="1.3" height="1.3" fill="#000"/><rect x="4" y="5.4" width="1.2" height=".9" fill="#ddd"/><rect x="6" y="2" width="1.3" height="1.3" fill="#000"/><rect x="6" y="4" width="1.3" height="1.3" fill="#000"/><rect x="6" y="5.4" width="1.2" height=".9" fill="#ddd"/><rect x="8" y="2" width="1.3" height="1.3" fill="#000"/><rect x="8" y="4" width="1.3" height="1.3" fill="#000"/><rect x="8" y="5.4" width="1.2" height=".9" fill="#ddd"/><rect x="10" y="2" width="1.3" height="1.3" fill="#000"/><rect x="10" y="4" width="1.3" height="1.3" fill="#000"/><rect x="10" y="5.4" width="1.2" height=".9" fill="#ddd"/><rect x="12" y="2" width="1.3" height="1.3" fill="#000"/><rect x="12" y="4" width="1.3" height="1.3" fill="#000"/><rect x="12" y="5.4" width="1.2" height=".9" fill="#ddd"/><rect x="14" y="2" width="1.3" height="1.3" fill="#000"/><rect x="14" y="4" width="1.3" height="1.3" fill="#000"/><rect x="14" y="5.4" width="1.2" height=".9" fill="#ddd"/><rect x="16" y="2" width="1.3" height="1.3" fill="#000"/><rect x="16" y="4" width="1.3" height="1.3" fill="#000"/><rect x="16" y="5.4" width="1.2" height=".9" fill="#ddd"/></svg>
<div class="a" style="left:1625px;top:574px;width:23px;height:135px;background:#ebebeb;border-top:1px solid #fff;border-left:1px solid #fff"></div>
<svg class="a" style="left:1628px;top:575px" width="16" height="16" viewBox="0 0 16 16" ><rect x="1.5" y="1.5" width="8" height="6" fill="#f4f4f4" stroke="#333"/><rect x="4.5" y="5.5" width="8" height="6" fill="#aaa" stroke="#333"/><rect x="6.5" y="9.5" width="8" height="5" fill="#f4f4f4" stroke="#333"/></svg>
<svg class="a" style="left:1628px;top:597px" width="16" height="16" viewBox="0 0 16 16" ><rect x="1.5" y="1.5" width="8" height="6" fill="#f4f4f4" stroke="#333"/><rect x="4.5" y="5.5" width="8" height="6" fill="#f4f4f4" stroke="#333"/><rect x="6.5" y="9.5" width="8" height="5" fill="#f4f4f4" stroke="#333"/></svg>
<svg class="a" style="left:1628px;top:619px" width="16" height="16" viewBox="0 0 16 16" ><rect x="1.5" y="2.5" width="10" height="7" fill="#f4f4f4" stroke="#333"/><rect x="4.5" y="6.5" width="10" height="7" fill="#999" stroke="#333"/></svg>
<svg class="a" style="left:1628px;top:641px" width="16" height="16" viewBox="0 0 16 16" ><rect x="1.5" y="2.5" width="10" height="7" fill="#f4f4f4" stroke="#333"/><rect x="4.5" y="6.5" width="10" height="7" fill="#bbb" stroke="#333"/><rect x="1.5" y="2.5" width="10" height="7" fill="#f4f4f4" stroke="#333"/></svg>
<svg class="a" style="left:1628px;top:670px" width="16" height="16" viewBox="0 0 16 16" ><text x="1" y="8" font-size="7" font-family="Liberation Mono" font-weight="bold">ABC</text><path d="M2 10v5h11" stroke="#222" fill="none"/><path d="M12 15l3-3v3z" fill="#111"/></svg>
<svg class="a" style="left:1628px;top:691px" width="16" height="16" viewBox="0 0 16 16" ><rect x="1.5" y="1.5" width="11" height="8" fill="#999" stroke="#555"/><path d="M6 14h9M14 8v7" stroke="#222" stroke-dasharray="1 1"/><path d="M10 12l4-4" stroke="#222"/></svg>
<div class="a" style="left:1627px;top:663px;width:18px;height:1px;background:#a8a8a8;border-bottom:1px solid #fff"></div>
<div class="a" style="left:1652px;top:158px;width:25px;height:314px;background:#383838"></div>
<svg class="a" style="left:1653px;top:159px" width="23" height="8"><rect width="23" height="8" fill="#6b6b6b"/><rect x="4" y="2" width="1.3" height="1.3" fill="#000"/><rect x="4" y="4" width="1.3" height="1.3" fill="#000"/><rect x="4" y="5.4" width="1.2" height=".9" fill="#ddd"/><rect x="6" y="2" width="1.3" height="1.3" fill="#000"/><rect x="6" y="4" width="1.3" height="1.3" fill="#000"/><rect x="6" y="5.4" width="1.2" height=".9" fill="#ddd"/><rect x="8" y="2" width="1.3" height="1.3" fill="#000"/><rect x="8" y="4" width="1.3" height="1.3" fill="#000"/><rect x="8" y="5.4" width="1.2" height=".9" fill="#ddd"/><rect x="10" y="2" width="1.3" height="1.3" fill="#000"/><rect x="10" y="4" width="1.3" height="1.3" fill="#000"/><rect x="10" y="5.4" width="1.2" height=".9" fill="#ddd"/><rect x="12" y="2" width="1.3" height="1.3" fill="#000"/><rect x="12" y="4" width="1.3" height="1.3" fill="#000"/><rect x="12" y="5.4" width="1.2" height=".9" fill="#ddd"/><rect x="14" y="2" width="1.3" height="1.3" fill="#000"/><rect x="14" y="4" width="1.3" height="1.3" fill="#000"/><rect x="14" y="5.4" width="1.2" height=".9" fill="#ddd"/><rect x="16" y="2" width="1.3" height="1.3" fill="#000"/><rect x="16" y="4" width="1.3" height="1.3" fill="#000"/><rect x="16" y="5.4" width="1.2" height=".9" fill="#ddd"/></svg>
<div class="a" style="left:1653px;top:167px;width:23px;height:304px;background:#ebebeb;border-top:1px solid #fff;border-left:1px solid #fff"></div>
<svg class="a" style="left:1656px;top:170px" width="16" height="16" viewBox="0 0 16 16" ><rect x="0" y="0" width="16" height="16" fill="#e8e2d0"/><rect x="1" y="1" width="14" height="4" fill="#2a6ab0"/><rect x="3" y="2" width="10" height="2" fill="#fff"/><path d="M2 6v8h4l4-6" stroke="#2a6ab0" fill="none"/><path d="M9 11c2-1 3 1 2 3s-4 2-6 1c2-1 2-3 4-4z" fill="#c8642a"/><path d="M10 12l6-6" stroke="#9a4a18" stroke-width="2"/></svg>
<svg class="a" style="left:1656px;top:192px" width="16" height="16" viewBox="0 0 16 16" ><rect x="0" y="0" width="16" height="16" fill="#e8e2d0"/><path d="M2 11V6h4" stroke="#222" fill="none"/><rect x="1" y="10" width="2" height="2" fill="#fff" stroke="#222" stroke-width=".6"/><path d="M3 11h9M10 9l2 2-2 2" stroke="#e00" stroke-width="1.3" fill="none"/><path d="M9 11c2-1 3 1 2 3s-4 2-6 1c2-1 2-3 4-4z" fill="#c8642a"/><path d="M10 12l6-6" stroke="#9a4a18" stroke-width="2"/></svg>
<svg class="a" style="left:1656px;top:214px" width="16" height="16" viewBox="0 0 16 16" ><rect x="0" y="0" width="16" height="16" fill="#e8e2d0"/><text x="0" y="11" font-size="12" fill="#2a4a6a" font-family="Liberation Sans">A</text><text x="8" y="8" font-size="8" fill="#888" font-family="Liberation Sans">4</text><path d="M9 11c2-1 3 1 2 3s-4 2-6 1c2-1 2-3 4-4z" fill="#c8642a"/><path d="M10 12l6-6" stroke="#9a4a18" stroke-width="2"/></svg>
<svg class="a" style="left:1656px;top:241px" width="16" height="16" viewBox="0 0 16 16" ><rect x="0" y="0" width="16" height="16" fill="#e8e2d0"/><path d="M1 4l7-3 7 3-7 3z M1 7l7 3 7-3M1 10l7 3 6-3" fill="#fff" stroke="#555"/><path d="M9 11c2-1 3 1 2 3s-4 2-6 1c2-1 2-3 4-4z" fill="#c8642a"/><path d="M10 12l6-6" stroke="#9a4a18" stroke-width="2"/></svg>
<svg class="a" style="left:1656px;top:263px" width="16" height="16" viewBox="0 0 16 16" ><rect x="0" y="0" width="16" height="16" fill="#e8e2d0"/><rect x="1" y="1" width="3" height="6" fill="#f00"/><rect x="4" y="1" width="3" height="6" fill="#f0f"/><rect x="7" y="1" width="3" height="6" fill="#00f"/><rect x="10" y="1" width="3" height="6" fill="#0f0"/><rect x="13" y="1" width="3" height="6" fill="#ff0"/><path d="M9 11c2-1 3 1 2 3s-4 2-6 1c2-1 2-3 4-4z" fill="#c8642a"/><path d="M10 12l6-6" stroke="#9a4a18" stroke-width="2"/></svg>
<svg class="a" style="left:1656px;top:286px" width="16" height="16" viewBox="0 0 16 16" ><rect x="0" y="0" width="16" height="16" fill="#e8e2d0"/><rect x="1" y="1" width="3" height="3" fill="#f00"/><rect x="4" y="1" width="3" height="3" fill="#f0f"/><rect x="7" y="1" width="3" height="3" fill="#00f"/><rect x="10" y="1" width="3" height="3" fill="#0f0"/><rect x="13" y="1" width="3" height="3" fill="#ff0"/><path d="M1 6l6 2 6-2M1 9l6 2" stroke="#555" fill="none"/><path d="M9 11c2-1 3 1 2 3s-4 2-6 1c2-1 2-3 4-4z" fill="#c8642a"/><path d="M10 12l6-6" stroke="#9a4a18" stroke-width="2"/></svg>
<svg class="a" style="left:1656px;top:308px" width="16" height="16" viewBox="0 0 16 16" ><rect x="0" y="0" width="16" height="16" fill="#e8e2d0"/><rect x="1.5" y="1.5" width="8" height="13" fill="#fff" stroke="#2a5a9a"/><rect x="3.5" y="3.5" width="4" height="4" fill="#fff" stroke="#2a5a9a"/><path d="M9 11c2-1 3 1 2 3s-4 2-6 1c2-1 2-3 4-4z" fill="#c8642a"/><path d="M10 12l6-6" stroke="#9a4a18" stroke-width="2"/></svg>
<svg class="a" style="left:1656px;top:336px" width="16" height="16" viewBox="0 0 16 16" ><rect x="0" y="0" width="16" height="16" fill="#e8e2d0"/><text x="0" y="10" font-size="10" fill="#334" font-family="Liberation Sans" font-weight="bold">A</text><text x="7" y="9" font-size="9" fill="#2050c0" font-weight="bold" font-family="Liberation Sans">B</text><path d="M9 11c2-1 3 1 2 3s-4 2-6 1c2-1 2-3 4-4z" fill="#c8642a"/><path d="M10 12l6-6" stroke="#9a4a18" stroke-width="2"/></svg>
<svg class="a" style="left:1656px;top:358px" width="16" height="16" viewBox="0 0 16 16" ><rect x="0" y="0" width="16" height="16" fill="#e8e2d0"/><text x="0" y="10" font-size="11" fill="#334" font-family="Liberation Sans">A</text><text x="10" y="6" font-size="7" fill="#2050c0" font-family="Liberation Sans">s</text><path d="M9 11c2-1 3 1 2 3s-4 2-6 1c2-1 2-3 4-4z" fill="#c8642a"/><path d="M10 12l6-6" stroke="#9a4a18" stroke-width="2"/></svg>
<svg class="a" style="left:1656px;top:380px" width="16" height="16" viewBox="0 0 16 16" ><rect x="0" y="0" width="16" height="16" fill="#e8e2d0"/><text x="0" y="10" font-size="11" fill="#334" font-family="Liberation Sans">AI</text><text x="11" y="6" font-size="7" fill="#2050c0" font-family="Liberation Sans">h</text><path d="M9 11c2-1 3 1 2 3s-4 2-6 1c2-1 2-3 4-4z" fill="#c8642a"/><path d="M10 12l6-6" stroke="#9a4a18" stroke-width="2"/></svg>
<svg class="a" style="left:1656px;top:410px" width="16" height="16" viewBox="0 0 16 16" ><rect x="0" y="0" width="16" height="16" fill="#e8e2d0"/><path d="M12 3H4a3 3 0 000 6h8a3 3 0 010 6H2" fill="none" stroke="#222" stroke-width="1.3"/><path d="M9 11c2-1 3 1 2 3s-4 2-6 1c2-1 2-3 4-4z" fill="#c8642a"/><path d="M10 12l6-6" stroke="#9a4a18" stroke-width="2"/></svg>
<svg class="a" style="left:1656px;top:432px" width="16" height="16" viewBox="0 0 16 16" ><rect x="0" y="0" width="16" height="16" fill="#e8e2d0"/><path d="M1 3h14M1 6h14M1 9h12" stroke="#333" stroke-dasharray="2 1"/><path d="M9 11c2-1 3 1 2 3s-4 2-6 1c2-1 2-3 4-4z" fill="#c8642a"/><path d="M10 12l6-6" stroke="#9a4a18" stroke-width="2"/></svg>
<svg class="a" style="left:1656px;top:454px" width="16" height="16" viewBox="0 0 16 16" ><rect x="0" y="0" width="16" height="16" fill="#e8e2d0"/><path d="M2 12V5l4-4v7z M6 8l5 0" fill="#fff" stroke="#333"/><text x="10" y="6" font-size="7" fill="#e00" font-family="Liberation Sans" font-weight="bold">T</text><path d="M9 11c2-1 3 1 2 3s-4 2-6 1c2-1 2-3 4-4z" fill="#c8642a"/><path d="M10 12l6-6" stroke="#9a4a18" stroke-width="2"/></svg>
<div class="a" style="left:1655px;top:235px;width:18px;height:1px;background:#a8a8a8;border-bottom:1px solid #fff"></div>
<div class="a" style="left:1655px;top:329px;width:18px;height:1px;background:#a8a8a8;border-bottom:1px solid #fff"></div>
<div class="a" style="left:1655px;top:402px;width:18px;height:1px;background:#a8a8a8;border-bottom:1px solid #fff"></div>
<div class="a" style="left:1652px;top:474px;width:25px;height:453px;background:#383838"></div>
<svg class="a" style="left:1653px;top:475px" width="23" height="8"><rect width="23" height="8" fill="#6b6b6b"/><rect x="4" y="2" width="1.3" height="1.3" fill="#000"/><rect x="4" y="4" width="1.3" height="1.3" fill="#000"/><rect x="4" y="5.4" width="1.2" height=".9" fill="#ddd"/><rect x="6" y="2" width="1.3" height="1.3" fill="#000"/><rect x="6" y="4" width="1.3" height="1.3" fill="#000"/><rect x="6" y="5.4" width="1.2" height=".9" fill="#ddd"/><rect x="8" y="2" width="1.3" height="1.3" fill="#000"/><rect x="8" y="4" width="1.3" height="1.3" fill="#000"/><rect x="8" y="5.4" width="1.2" height=".9" fill="#ddd"/><rect x="10" y="2" width="1.3" height="1.3" fill="#000"/><rect x="10" y="4" width="1.3" height="1.3" fill="#000"/><rect x="10" y="5.4" width="1.2" height=".9" fill="#ddd"/><rect x="12" y="2" width="1.3" height="1.3" fill="#000"/><rect x="12" y="4" width="1.3" height="1.3" fill="#000"/><rect x="12" y="5.4" width="1.2" height=".9" fill="#ddd"/><rect x="14" y="2" width="1.3" height="1.3" fill="#000"/><rect x="14" y="4" width="1.3" height="1.3" fill="#000"/><rect x="14" y="5.4" width="1.2" height=".9" fill="#ddd"/><rect x="16" y="2" width="1.3" height="1.3" fill="#000"/><rect x="16" y="4" width="1.3" height="1.3" fill="#000"/><rect x="16" y="5.4" width="1.2" height=".9" fill="#ddd"/></svg>
<div class="a" style="left:1653px;top:483px;width:23px;height:443px;background:#ebebeb;border-top:1px solid #fff;border-left:1px solid #fff"></div>
<svg class="a" style="left:1656px;top:483px" width="16" height="16" viewBox="0 0 16 16" ><rect x="3" y="3" width="10" height="10" fill="#b8cce8"/><path d="M3 7l4-4M3 11l8-8M5 13l8-8M9 13l4-4" stroke="#fff"/><path d="M3 1v14M13 1v14M1 3h14M1 13h14" stroke="#1a4a9a" stroke-width="1.3"/><rect x="8" y="9" width="7" height="5" fill="#fff" stroke="#333"/></svg>
<svg class="a" style="left:1656px;top:505px" width="16" height="16" viewBox="0 0 16 16" ><rect x="3" y="3" width="10" height="10" fill="#b8cce8"/><path d="M3 7l4-4M3 11l8-8M5 13l8-8M9 13l4-4" stroke="#fff"/><path d="M3 1v14M13 1v14M1 3h14M1 13h14" stroke="#1a4a9a" stroke-width="1.3"/><path d="M5 14l10-9v3z" fill="#ccc" stroke="#555"/></svg>
<svg class="a" style="left:1656px;top:527px" width="16" height="16" viewBox="0 0 16 16" ><rect x="3" y="3" width="10" height="10" fill="#b8cce8"/><path d="M3 7l4-4M3 11l8-8M5 13l8-8M9 13l4-4" stroke="#fff"/><path d="M3 1v14M13 1v14M1 3h14M1 13h14" stroke="#1a4a9a" stroke-width="1.3"/><path d="M12 2l1 3 3 1-3 1-1 3-1-3-3-1 3-1z" fill="#f0a020"/></svg>
<svg class="a" style="left:1656px;top:549px" width="16" height="16" viewBox="0 0 16 16" ><rect x="3" y="3" width="10" height="10" fill="#b8cce8"/><path d="M3 7l4-4M3 11l8-8M5 13l8-8M9 13l4-4" stroke="#fff"/><path d="M3 1v14M13 1v14M1 3h14M1 13h14" stroke="#1a4a9a" stroke-width="1.3"/><rect x="6.5" y="8.5" width="9" height="7" fill="#fff" stroke="#333"/><path d="M8 11h6M8 13h6" stroke="#333"/><path d="M13 1l2 3" stroke="#f0a020" stroke-width="2"/></svg>
<svg class="a" style="left:1656px;top:571px" width="16" height="16" viewBox="0 0 16 16" ><rect x="3" y="3" width="10" height="10" fill="#b8cce8"/><path d="M3 7l4-4M3 11l8-8M5 13l8-8M9 13l4-4" stroke="#fff"/><path d="M3 1v14M13 1v14M1 3h14M1 13h14" stroke="#1a4a9a" stroke-width="1.3"/></svg>
<svg class="a" style="left:1656px;top:600px" width="16" height="16" viewBox="0 0 16 16" ><rect x="3" y="3" width="10" height="10" fill="#b8cce8"/><path d="M3 7l4-4M3 11l8-8M5 13l8-8M9 13l4-4" stroke="#fff"/><path d="M3 1v14M13 1v14M1 3h14M1 13h14" stroke="#1a4a9a" stroke-width="1.3"/><path d="M6 13h9M8 11l-2 2 2 2" stroke="#e00" fill="none"/><circle cx="3" cy="13" r="1.5" fill="#111"/></svg>
<svg class="a" style="left:1656px;top:622px" width="16" height="16" viewBox="0 0 16 16" ><rect x="3" y="3" width="10" height="10" fill="#b8cce8"/><path d="M3 7l4-4M3 11l8-8M5 13l8-8M9 13l4-4" stroke="#fff"/><path d="M3 1v14M13 1v14M1 3h14M1 13h14" stroke="#1a4a9a" stroke-width="1.3"/><path d="M3 13l10-10" stroke="#e00" stroke-width="1.3"/><path d="M10 9c3 0 3 5 0 5" stroke="#e00" fill="none"/><circle cx="3" cy="13" r="1.5" fill="#111"/></svg>
<svg class="a" style="left:1656px;top:644px" width="16" height="16" viewBox="0 0 16 16" ><rect x="1.5" y="1.5" width="11" height="11" fill="#b8cce8" stroke="#e00" stroke-width="1.3"/><path d="M2 6l4-4M2 10l8-8M5 12l7-7" stroke="#fff"/><path d="M12 8l1 3 3 1-3 1-1 3-1-3-3-1 3-1z" fill="#f0a020"/><path d="M9 9l7-7" stroke="#888" stroke-width="1.5"/></svg>
<svg class="a" style="left:1656px;top:666px" width="16" height="16" viewBox="0 0 16 16" ><rect x="3" y="3" width="10" height="10" fill="#b8cce8"/><path d="M3 7l4-4M3 11l8-8M5 13l8-8M9 13l4-4" stroke="#fff"/><path d="M3 1v14M13 1v14M1 3h14M1 13h14" stroke="#1a4a9a" stroke-width="1.3"/><circle cx="5" cy="13" r="2" fill="none" stroke="#c04010" stroke-width="1.3"/><circle cx="12" cy="13" r="2" fill="none" stroke="#c04010" stroke-width="1.3"/><path d="M6 11l7-6M11 11L6 6" stroke="#c04010" stroke-width="1.3"/></svg>
<svg class="a" style="left:1656px;top:688px" width="16" height="16" viewBox="0 0 16 16" ><rect x="1.5" y="1.5" width="13" height="13" fill="#b8cce8" stroke="#2a5a9a"/><path d="M8 1v14M1 8h14" stroke="#fff"/><path d="M8 3v6M5 6l3 4 3-4z" fill="#e00" stroke="#e00" stroke-width="1.5"/></svg>
<svg class="a" style="left:1656px;top:710px" width="16" height="16" viewBox="0 0 16 16" ><rect x="1.5" y="1.5" width="13" height="13" fill="#b8cce8" stroke="#2a5a9a"/><path d="M8 1v14M1 8h14" stroke="#fff"/><path d="M8 13V7M5 10l3-4 3 4z" fill="#e00" stroke="#e00" stroke-width="1.5"/></svg>
<svg class="a" style="left:1656px;top:732px" width="16" height="16" viewBox="0 0 16 16" ><path d="M1.5 1.5h9l4 6h-13z" fill="#b8cce8" stroke="#2a5a9a"/><path d="M3 4l3-2M3 7l6-5" stroke="#fff"/><path d="M11 9v5M7 14h8" stroke="#e00"/></svg>
<svg class="a" style="left:1656px;top:761px" width="16" height="16" viewBox="0 0 16 16" ><path d="M4 6l5-5 5 5-5 5z" fill="#c08050" stroke="#333"/><path d="M1 13h14" stroke="#2a5ab0" stroke-width="2.5"/><path d="M1 11v2" stroke="#2a5ab0"/></svg>
<svg class="a" style="left:1656px;top:787px" width="16" height="16" viewBox="0 0 16 16" ><rect x="3" y="3" width="10" height="10" fill="#b8cce8"/><path d="M3 7l4-4M3 11l8-8M5 13l8-8M9 13l4-4" stroke="#fff"/><path d="M3 1v14M13 1v14M1 3h14M1 13h14" stroke="#1a4a9a" stroke-width="1.3"/><path d="M7 15l8-12 1 1-8 12z" fill="#f0c020" stroke="#333" stroke-width=".7"/></svg>
<svg class="a" style="left:1656px;top:810px" width="16" height="16" viewBox="0 0 16 16" ><rect x="3" y="3" width="10" height="10" fill="#b8cce8"/><path d="M3 7l4-4M3 11l8-8M5 13l8-8M9 13l4-4" stroke="#fff"/><path d="M3 1v14M13 1v14M1 3h14M1 13h14" stroke="#1a4a9a" stroke-width="1.3"/><path d="M6 15l8-12 1 1-8 12z" fill="#f0c020" stroke="#333" stroke-width=".7"/><text x="12" y="16" font-size="8" fill="#e00" font-weight="bold" font-family="Liberation Sans">1</text></svg>
<svg class="a" style="left:1656px;top:832px" width="16" height="16" viewBox="0 0 16 16" ><rect x="3" y="3" width="10" height="9" fill="#ddd"/><path d="M3 1v14M13 1v14M1 3h14M1 12h14" stroke="#1a4a9a" stroke-width="1.3"/><path d="M3 7l4-4M3 11l8-8" stroke="#fff"/><path d="M7 15l8-12 1 1-8 12z" fill="#f0c020" stroke="#333" stroke-width=".7"/></svg>
<svg class="a" style="left:1656px;top:860px" width="16" height="16" viewBox="0 0 16 16" ><path d="M1 2h14M1 6h14M1 10h3M1 14h3" stroke="#2050e0" stroke-width="1.3" stroke-dasharray="3 1 1 1"/><path d="M6 14l3-4h6v4z" fill="#fff" stroke="#333"/></svg>
<svg class="a" style="left:1656px;top:882px" width="16" height="16" viewBox="0 0 16 16" ><path d="M1 2h14M1 6h14M1 10h14M1 14h14" stroke="#2050e0" stroke-width="1.3" stroke-dasharray="3 1 1 1"/><path d="M3 15l12-10v3z" fill="#ccc" stroke="#444"/></svg>
<svg class="a" style="left:1656px;top:903px" width="16" height="16" viewBox="0 0 16 16" ><path d="M1 1.5h14" stroke="#111"/><path d="M1 14.5h14" stroke="#111" stroke-dasharray="2 1"/><path d="M8 3l3 3H5zM8 13l3-3H5zM8 5v6" fill="#e00" stroke="#e00" stroke-width="1.5"/></svg>
<div class="a" style="left:1655px;top:594px;width:18px;height:1px;background:#a8a8a8;border-bottom:1px solid #fff"></div>
<div class="a" style="left:1655px;top:753px;width:18px;height:1px;background:#a8a8a8;border-bottom:1px solid #fff"></div>
<div class="a" style="left:1655px;top:781px;width:18px;height:1px;background:#a8a8a8;border-bottom:1px solid #fff"></div>
<div class="a" style="left:1655px;top:854px;width:18px;height:1px;background:#a8a8a8;border-bottom:1px solid #fff"></div>
<div class="a" style="left:94px;top:878px;width:1524px;height:15px;background:#f0f0f0"></div>
<div class="a" style="left:92px;top:893px;width:1528px;height:2px;background:#f8f8f8"></div>
<svg class="a" style="left:94px;top:878px" width="200" height="15">
<rect x="0.5" y="0.5" width="11" height="14" fill="#f0f0f0" stroke="#b0b0b0"/>
<rect x="11.5" y="0.5" width="14" height="14" fill="#f0f0f0" stroke="#b0b0b0"/>
<rect x="25.5" y="0.5" width="14" height="14" fill="#f0f0f0" stroke="#b0b0b0"/>
<rect x="39.5" y="0.5" width="16" height="14" fill="#f0f0f0" stroke="#b0b0b0"/>
<path d="M3 3.5v8M9 3.5l-5 4 5 4z" fill="#777" stroke="#777"/>
<path d="M21 3.5l-5 4 5 4z" fill="#777"/>
<path d="M30 3.5l5 4-5 4z" fill="#777"/>
<path d="M44 3.5l5 4-5 4zM51 3.5v8" fill="#777" stroke="#777"/>
<path d="M57 0H103L98 14H62Z" fill="#000"/>
<path d="M103 0l-5 14M148 0l-5 14M193 0l-5 14" stroke="#555" fill="none"/>
</svg>
<div class="a t" style="left:161px;top:880px;font-size:12px;color:#fff">模型</div>
<div class="a t" style="left:200px;top:880px;font-size:12px">布局1</div>
<div class="a t" style="left:246px;top:880px;font-size:12px">布局2</div>
<div class="a" style="left:92px;top:899px;width:239px;height:24px;background:#383838"></div>
<svg class="a" style="left:93px;top:900px" width="8" height="22"><rect width="8" height="22" fill="#6b6b6b"/><rect x="2" y="3" width="1.3" height="1.3" fill="#000"/><rect x="4" y="3" width="1.3" height="1.3" fill="#000"/><rect x="5.4" y="3" width=".9" height="1.2" fill="#ddd"/><rect x="2" y="5" width="1.3" height="1.3" fill="#000"/><rect x="4" y="5" width="1.3" height="1.3" fill="#000"/><rect x="5.4" y="5" width=".9" height="1.2" fill="#ddd"/><rect x="2" y="7" width="1.3" height="1.3" fill="#000"/><rect x="4" y="7" width="1.3" height="1.3" fill="#000"/><rect x="5.4" y="7" width=".9" height="1.2" fill="#ddd"/><rect x="2" y="9" width="1.3" height="1.3" fill="#000"/><rect x="4" y="9" width="1.3" height="1.3" fill="#000"/><rect x="5.4" y="9" width=".9" height="1.2" fill="#ddd"/><rect x="2" y="11" width="1.3" height="1.3" fill="#000"/><rect x="4" y="11" width="1.3" height="1.3" fill="#000"/><rect x="5.4" y="11" width=".9" height="1.2" fill="#ddd"/><rect x="2" y="13" width="1.3" height="1.3" fill="#000"/><rect x="4" y="13" width="1.3" height="1.3" fill="#000"/><rect x="5.4" y="13" width=".9" height="1.2" fill="#ddd"/><rect x="2" y="15" width="1.3" height="1.3" fill="#000"/><rect x="4" y="15" width="1.3" height="1.3" fill="#000"/><rect x="5.4" y="15" width=".9" height="1.2" fill="#ddd"/><rect x="2" y="17" width="1.3" height="1.3" fill="#000"/><rect x="4" y="17" width="1.3" height="1.3" fill="#000"/><rect x="5.4" y="17" width=".9" height="1.2" fill="#ddd"/></svg>
<div class="a" style="left:101px;top:900px;width:229px;height:22px;background:#ebebeb;border-top:1px solid #fff;border-left:1px solid #fff"></div>
<svg class="a" style="left:104px;top:903px" width="16" height="16" viewBox="0 0 16 16" ><rect x="1" y="1" width="14" height="14" fill="#1a7a1a"/><rect x="2.5" y="2.5" width="11" height="11" fill="#fff" stroke="#222"/><rect x="3" y="3" width="7" height="10" fill="#ccc"/><path d="M11 5h2M11 8h2M11 11h2" stroke="#222"/></svg>
<svg class="a" style="left:127px;top:903px" width="16" height="16" viewBox="0 0 16 16" ><rect x="0" y="0" width="16" height="16" fill="#ddd5c8"/><path d="M3 2v13M5 3h9v11H5zM5 7h9M5 10h9M3 2l2 1" stroke="#b01010" stroke-width="1.4" fill="none"/></svg>
<svg class="a" style="left:149px;top:903px" width="16" height="16" viewBox="0 0 16 16" ><rect x="0" y="0" width="16" height="16" fill="#fff"/><path d="M2 12l7-5 5 5z" fill="#3a9ad0"/><path d="M5 10l10-9" stroke="#20a020" stroke-width="2"/><path d="M1 13l6-2" stroke="#3a6a9a"/></svg>
<svg class="a" style="left:172px;top:903px" width="16" height="16" viewBox="0 0 16 16" ><rect x="0" y="0" width="16" height="16" fill="#fff"/><rect x="1" y="3" width="11" height="9" fill="#9ad0f0" transform="rotate(-10 6 7)"/><circle cx="9" cy="9" r="3" fill="#ddd" stroke="#444"/><path d="M11 11l4 4" stroke="#555" stroke-width="2"/></svg>
<svg class="a" style="left:195px;top:903px" width="16" height="16" viewBox="0 0 16 16" ><path d="M2 7l9-5 4 3-9 6z" fill="#fff" stroke="#222" stroke-dasharray="1.2 .8"/><path d="M2 11l9-5 4 3-9 6z" fill="#eee" stroke="#222" stroke-dasharray="1.2 .8"/></svg>
<svg class="a" style="left:218px;top:903px" width="16" height="16" viewBox="0 0 16 16" ><rect x="1" y="4" width="14" height="11" fill="#f0c820" stroke="#806010"/><path d="M8 1l6 6H2z" fill="#fff" stroke="#555"/><circle cx="6" cy="11" r="2.5" fill="#222"/><circle cx="10" cy="11" r="2.5" fill="#222"/><path d="M8 4l-2 5h4z" fill="#3a6ab0"/></svg>
<svg class="a" style="left:242px;top:903px" width="16" height="16" viewBox="0 0 16 16" ><rect x="0" y="0" width="16" height="16" fill="#c8c8c8"/><text x="1" y="7" font-size="8" font-family="Liberation Serif" font-weight="bold">a</text><text x="7" y="15" font-size="10" fill="#d02020" font-family="Liberation Serif" font-weight="bold">A</text><path d="M3 9c0 3 2 4 4 4" stroke="#2040d0" fill="none"/></svg>
<svg class="a" style="left:265px;top:903px" width="16" height="16" viewBox="0 0 16 16" ><rect x="0" y="0" width="16" height="16" fill="#c8c8c8"/><text x="0" y="8" font-size="9" font-family="Liberation Serif" font-weight="bold">A</text><text x="9" y="15" font-size="8" fill="#d02020" font-family="Liberation Serif" font-weight="bold">a</text><path d="M3 10c0 3 2 4 4 4" stroke="#2040d0" fill="none"/></svg>
<svg class="a" style="left:288px;top:903px" width="16" height="16" viewBox="0 0 16 16" ><rect x="0" y="0" width="16" height="16" fill="#ddd5c8"/><text x="1" y="13" font-size="13" fill="#3a70b0" font-family="Liberation Sans">设</text></svg>
<svg class="a" style="left:310px;top:903px" width="16" height="16" viewBox="0 0 16 16" ><rect x="0" y="0" width="16" height="16" fill="#ddd5c8"/><text x="1" y="13" font-size="13" fill="#3a70b0" font-family="Liberation Sans">定</text></svg>
<div class="a" style="left:333px;top:899px;width:169px;height:24px;background:#383838"></div>
<svg class="a" style="left:334px;top:900px" width="8" height="22"><rect width="8" height="22" fill="#6b6b6b"/><rect x="2" y="3" width="1.3" height="1.3" fill="#000"/><rect x="4" y="3" width="1.3" height="1.3" fill="#000"/><rect x="5.4" y="3" width=".9" height="1.2" fill="#ddd"/><rect x="2" y="5" width="1.3" height="1.3" fill="#000"/><rect x="4" y="5" width="1.3" height="1.3" fill="#000"/><rect x="5.4" y="5" width=".9" height="1.2" fill="#ddd"/><rect x="2" y="7" width="1.3" height="1.3" fill="#000"/><rect x="4" y="7" width="1.3" height="1.3" fill="#000"/><rect x="5.4" y="7" width=".9" height="1.2" fill="#ddd"/><rect x="2" y="9" width="1.3" height="1.3" fill="#000"/><rect x="4" y="9" width="1.3" height="1.3" fill="#000"/><rect x="5.4" y="9" width=".9" height="1.2" fill="#ddd"/><rect x="2" y="11" width="1.3" height="1.3" fill="#000"/><rect x="4" y="11" width="1.3" height="1.3" fill="#000"/><rect x="5.4" y="11" width=".9" height="1.2" fill="#ddd"/><rect x="2" y="13" width="1.3" height="1.3" fill="#000"/><rect x="4" y="13" width="1.3" height="1.3" fill="#000"/><rect x="5.4" y="13" width=".9" height="1.2" fill="#ddd"/><rect x="2" y="15" width="1.3" height="1.3" fill="#000"/><rect x="4" y="15" width="1.3" height="1.3" fill="#000"/><rect x="5.4" y="15" width=".9" height="1.2" fill="#ddd"/><rect x="2" y="17" width="1.3" height="1.3" fill="#000"/><rect x="4" y="17" width="1.3" height="1.3" fill="#000"/><rect x="5.4" y="17" width=".9" height="1.2" fill="#ddd"/></svg>
<div class="a" style="left:342px;top:900px;width:159px;height:22px;background:#ebebeb;border-top:1px solid #fff;border-left:1px solid #fff"></div>
<svg class="a" style="left:343px;top:903px" width="16" height="16" viewBox="0 0 16 16" ><path d="M1 5l7-4 7 4z" fill="#1a4aa0"/><path d="M2 6h12M3 7v6M6 7v6M10 7v6M13 7v6M1 14h14" stroke="#1a4aa0" stroke-width="1.5"/></svg>
<svg class="a" style="left:366px;top:903px" width="16" height="16" viewBox="0 0 16 16" ><rect x="0" y="0" width="16" height="16" fill="#eee"/><circle cx="11" cy="3" r="2" fill="#1a4aa0"/><path d="M10 5L7 10l3 2-1 4M7 10l-5 1M9 6l4 3M8 7L4 6" stroke="#1a4aa0" stroke-width="2" fill="none"/></svg>
<svg class="a" style="left:389px;top:903px" width="16" height="16" viewBox="0 0 16 16" ><rect x="0" y="0" width="16" height="16" fill="#eee"/><path d="M8 2a6 6 0 100 12" fill="none" stroke="#888" stroke-width="2"/><path d="M8 2a6 6 0 010 12" fill="none" stroke="#2a70c0" stroke-width="2.5"/></svg>
<svg class="a" style="left:412px;top:903px" width="16" height="16" viewBox="0 0 16 16" ><rect x="0" y="0" width="16" height="16" fill="#eee"/><path d="M1 8c4-5 10-5 14 0-4 5-10 5-14 0z" fill="#fff" stroke="#3a70c0" stroke-width="1.3"/><circle cx="8" cy="8" r="2.5" fill="#2a30c0"/></svg>
<svg class="a" style="left:436px;top:903px" width="16" height="16" viewBox="0 0 16 16" ><rect x="0" y="0" width="16" height="16" fill="#e4e4e4"/><path d="M1 8c4-5 10-5 14 0-4 5-10 5-14 0z" fill="#ddd" stroke="#888" stroke-width="1.3"/><circle cx="8" cy="8" r="2.5" fill="#888"/></svg>
<svg class="a" style="left:459px;top:903px" width="16" height="16" viewBox="0 0 16 16" ><rect x="0" y="0" width="16" height="16" fill="#fff"/><path d="M2 4h7l2 2v5H2z" fill="#80b0e0" stroke="#2a70c0"/><path d="M4 12h8M10 10l3 2-3 2" stroke="#e08020" stroke-width="1.5" fill="none"/><circle cx="5" cy="4" r="1.5" fill="#e05010"/></svg>
<svg class="a" style="left:482px;top:903px" width="16" height="16" viewBox="0 0 16 16" ><path d="M3 2h6v12H3z" fill="#5a9ae0" stroke="#2a5aa0"/><path d="M8 4h7v8H8z" fill="#9ac8f0" stroke="#2a5aa0"/><path d="M1 15h8" stroke="#555"/></svg>
<div class="a" style="left:93px;top:931px;width:22px;height:56px;background:linear-gradient(90deg,#3e3e3e,#5a5a5a)"></div>
<div class="a" style="left:96px;top:935px;width:16px;height:5px;background:radial-gradient(circle,#9a9a9a .8px,transparent 1px) 0 0/3px 3px"></div>
<svg class="a" style="left:97px;top:947px" width="12" height="12"><path d="M2 2l8 8M10 2l-8 8" stroke="#fff" stroke-width="2"/></svg>
<svg class="a" style="left:96px;top:966px" width="16" height="16"><path d="M13 14L7 8" stroke="#fff" stroke-width="2.6" stroke-linecap="round"/><path d="M7.5 8.5a3.5 3.5 0 11-5-5l2 2 2-.5.5-2-2-2a3.5 3.5 0 015 5" fill="#fff" stroke="#fff" stroke-width="1"/></svg>
<div class="a" style="left:115px;top:931px;width:1565px;height:34px;background:#c6c6c6"></div>
<div class="a" style="left:115px;top:965px;width:1565px;height:22px;background:#fff"></div>
<div class="a" style="left:115px;top:964px;width:1565px;height:1px;background:#9a9a9a"></div>
<div class="a t" style="left:117px;top:933px;font-size:13px;color:#111;-webkit-text-stroke:.2px #111">指定基点或<span style="font-family:Liberation Mono;letter-spacing:-1.30px"> [</span>位移<span style="font-family:Liberation Mono;letter-spacing:-1.30px">(D)] &lt;</span>位移<span style="font-family:Liberation Mono;letter-spacing:-1.30px">&gt;:</span></div>
<div class="a t" style="left:117px;top:947px;font-size:13px;color:#111;-webkit-text-stroke:.2px #111">指定第二个点或<span style="font-family:Liberation Mono;letter-spacing:-1.30px"> &lt;</span>使用第一个点作为位移<span style="font-family:Liberation Mono;letter-spacing:-1.30px">&gt;:</span></div>
<svg class="a" style="left:120px;top:968px" width="30" height="16"><rect x=".5" y=".5" width="13" height="13" rx="2" fill="#f4f4f4" stroke="#a0a0a0"/><path d="M3 4l3 3-3 3M7 11h4" stroke="#333" fill="none"/><path d="M18 6h6l-3 3z" fill="#888"/></svg>
<div class="a t" style="left:153px;top:968px;font-size:13px;color:#a8a8a8;font-style:italic">键入命令</div>
<div class="a" style="left:0px;top:988px;width:1680px;height:22px;background:linear-gradient(#a2a2a2,#7e7e7e)"></div>
<div class="a" style="left:0px;top:987px;width:1680px;height:2px;background:#111"></div>
<div class="a" style="left:0px;top:989px;width:85px;height:21px;background:linear-gradient(#d0d0d0,#a6a6a6)"></div>
<div class="a" style="left:85px;top:989px;width:152px;height:21px;background:linear-gradient(#a2a2a2,#7e7e7e)"></div>
<div class="a t" style="left:6px;top:993px;font-size:12px;color:#111">比例<span style="font-family:Liberation Mono;letter-spacing:-1.20px"> 1:100</span></div>
<svg class="a" style="left:72px;top:995px" width="10" height="6"><path d="M0 0h9l-4.5 5z" fill="#111"/></svg>
<div class="a t" style="left:93px;top:995px;font-size:12px;color:#111"><span style="font-family:Liberation Mono;letter-spacing:-1.20px">485990, 313052, 0</span></div>
<div class="a" style="left:238px;top:989px;width:21px;height:21px;background:linear-gradient(#c4c4c4,#a4a4a4);border-right:1px solid #6a6a6a"></div>
<div class="a" style="left:260px;top:989px;width:21px;height:21px;background:linear-gradient(#c4c4c4,#a4a4a4);border-right:1px solid #6a6a6a"></div>
<div class="a" style="left:282px;top:989px;width:21px;height:21px;background:linear-gradient(#c4c4c4,#a4a4a4);border-right:1px solid #6a6a6a"></div>
<div class="a" style="left:304px;top:989px;width:21px;height:21px;background:linear-gradient(#d8eef8,#a8d4e8);border-right:1px solid #6a6a6a"></div>
<div class="a" style="left:326px;top:989px;width:21px;height:21px;background:linear-gradient(#c4c4c4,#a4a4a4);border-right:1px solid #6a6a6a"></div>
<div class="a" style="left:348px;top:989px;width:21px;height:21px;background:linear-gradient(#d8eef8,#a8d4e8);border-right:1px solid #6a6a6a"></div>
<div class="a" style="left:370px;top:989px;width:21px;height:21px;background:linear-gradient(#c4c4c4,#a4a4a4);border-right:1px solid #6a6a6a"></div>
<div class="a" style="left:392px;top:989px;width:21px;height:21px;background:linear-gradient(#d8eef8,#a8d4e8);border-right:1px solid #6a6a6a"></div>
<div class="a" style="left:414px;top:989px;width:21px;height:21px;background:linear-gradient(#d8eef8,#a8d4e8);border-right:1px solid #6a6a6a"></div>
<div class="a" style="left:436px;top:989px;width:21px;height:21px;background:linear-gradient(#d8eef8,#a8d4e8);border-right:1px solid #6a6a6a"></div>
<div class="a" style="left:458px;top:989px;width:21px;height:21px;background:linear-gradient(#c4c4c4,#a4a4a4);border-right:1px solid #6a6a6a"></div>
<div class="a" style="left:480px;top:989px;width:21px;height:21px;background:linear-gradient(#c4c4c4,#a4a4a4);border-right:1px solid #6a6a6a"></div>
<div class="a" style="left:502px;top:989px;width:21px;height:21px;background:linear-gradient(#c4c4c4,#a4a4a4);border-right:1px solid #6a6a6a"></div>
<div class="a" style="left:524px;top:989px;width:21px;height:21px;background:linear-gradient(#c4c4c4,#a4a4a4);border-right:1px solid #6a6a6a"></div>
<div class="a" style="left:546px;top:989px;width:21px;height:21px;background:linear-gradient(#c4c4c4,#a4a4a4);border-right:1px solid #6a6a6a"></div>
<svg class="a" style="left:238px;top:989px" width="330" height="21">
<g fill="none" stroke="#222">
<path d="M4 10h12M10 4v12"/><rect x="7.5" y="7.5" width="5" height="5"/><rect x="14" y="12" width="4" height="4" stroke="#d04020"/>
<path d="M27 6h10M27 9h10M27 12h10M27 15h12" stroke-dasharray="1 1"/>
<rect x="45.5" y="3.5" width="16" height="14" fill="#333"/><path d="M48.5 4v13M51.5 4v13M54.5 4v13M57.5 4v13M46 6.5h15M46 9.5h15M46 12.5h15M46 15.5h15" stroke="#eee"/>
<path d="M69 4v13h14" stroke="#3a70a0"/><path d="M69 12h5v5" stroke="#3a70a0"/>
<circle cx="96" cy="11" r="5"/><path d="M93 14l8-6M95 9l5 5"/>
<rect x="113.5" y="5.5" width="12" height="12" fill="#f8f8f8"/><circle cx="113" cy="5" r="2" stroke="#e06020"/>
<path d="M135 8l4-3h8v9l-4 3h-8z M135 8h8v9M143 8l4-3" fill="#f4f4f4"/><circle cx="135" cy="17" r="2" stroke="#e06020"/>
<path d="M158 16l10-9M158 16h11" stroke="#111" stroke-width="1.3"/>
<path d="M180 4v13h14M180 16l11-9" stroke="#111"/><path d="M191 3l-2 4h3l-2 4" stroke="#f0a020" stroke-width="1.5"/>
<path d="M201 11h8M205 7v8M207 12h7v3h-7z" stroke="#111" stroke-width="1.4"/>
<path d="M224 10h12M230 4v13" stroke="#111" stroke-width="2"/>
<rect x="247.5" y="4.5" width="15" height="13" fill="#9ac8f0" stroke="#2a6ab0" stroke-width="1.5"/>
<rect x="271.5" y="6.5" width="8" height="9" fill="#fff"/><path d="M273 9h5M273 11h5M273 13h5"/>
<path d="M290 4v6M287 7h6" stroke-width="1.3"/><rect x="294.5" y="9.5" width="8" height="8" fill="#60b060" stroke="#306030"/>
<path d="M313 4h6v5h5v6h-5v5h-6v-5h-5V9h5z" fill="#fff" stroke="#333" stroke-width="1.3"/>
</g></svg>
<div class="a" style="left:1118px;top:989px;width:29px;height:21px;background:linear-gradient(#c8c8c8,#a8a8a8);border-left:1px solid #777;border-right:1px solid #777"></div>
<div class="a t" style="left:1119px;top:993px;font-size:13px;color:#111">模型</div>
<div class="a" style="left:1148px;top:989px;width:21px;height:21px;background:linear-gradient(#c8c8c8,#a8a8a8);border-right:1px solid #777"></div>
<div class="a" style="left:1170px;top:989px;width:21px;height:21px;background:linear-gradient(#c8c8c8,#a8a8a8);border-right:1px solid #777"></div>
<svg class="a" style="left:1148px;top:989px" width="44" height="21"><rect x="4.5" y="4.5" width="12" height="11" fill="#fff" stroke="#222"/><path d="M7 13V7l6 6z" fill="none" stroke="#222"/><path d="M3 18h15" stroke="#333" stroke-width="1.5"/><rect x="25.5" y="4.5" width="6" height="7" fill="#fff" stroke="#222"/><rect x="32.5" y="4.5" width="6" height="7" fill="#fff" stroke="#222"/><path d="M25 15h14" stroke="#333" stroke-width="2"/></svg>
<div class="a" style="left:1192px;top:989px;width:18px;height:21px;background:#8e8e8e"></div>
<div class="a" style="left:1210px;top:989px;width:53px;height:21px;background:linear-gradient(#c8c8c8,#a8a8a8);border-right:1px solid #777"></div>
<svg class="a" style="left:1212px;top:991px" width="16" height="17"><path d="M8 1l1 8 6 6-7-3-7 3 6-6z" fill="#eee" stroke="#333"/></svg>
<div class="a t" style="left:1230px;top:993px;font-size:13px;color:#111;letter-spacing:1px">1:1</div>
<svg class="a" style="left:1250px;top:996px" width="10" height="6"><path d="M0 0h9l-4.5 5z" fill="#111"/></svg>
<div class="a" style="left:1264px;top:989px;width:21px;height:21px;background:linear-gradient(#c8c8c8,#a8a8a8);border-right:1px solid #777"></div>
<div class="a" style="left:1286px;top:989px;width:21px;height:21px;background:linear-gradient(#c8c8c8,#a8a8a8);border-right:1px solid #777"></div>
<svg class="a" style="left:1266px;top:991px" width="40" height="17"><path d="M7 1l1 8 6 6-7-3-7 3 6-6z" fill="#eee" stroke="#333"/><circle cx="12" cy="10" r="3" fill="#f8c020"/><path d="M29 1l1 8 6 6-7-3-7 3 6-6z" fill="#ccc" stroke="#999"/></svg>
<div class="a" style="left:1308px;top:989px;width:6px;height:21px;background:#8e8e8e"></div>
<div class="a" style="left:1314px;top:989px;width:21px;height:21px;background:linear-gradient(#c8c8c8,#a8a8a8);border-right:1px solid #777"></div>
<div class="a" style="left:1336px;top:989px;width:21px;height:21px;background:linear-gradient(#c8c8c8,#a8a8a8);border-right:1px solid #777"></div>
<div class="a" style="left:1358px;top:989px;width:21px;height:21px;background:linear-gradient(#c8c8c8,#a8a8a8);border-right:1px solid #777"></div>
<svg class="a" style="left:1314px;top:989px" width="66" height="21"><circle cx="10" cy="10" r="6" fill="none" stroke="#333" stroke-width="2.5" stroke-dasharray="2.5 1.5"/><circle cx="10" cy="10" r="2.5" fill="none" stroke="#333"/><rect x="26.5" y="9.5" width="9" height="8" fill="#fff" stroke="#333"/><path d="M33 9V6a3 3 0 016 0v2" fill="none" stroke="#333" stroke-width="1.3"/><circle cx="54" cy="11" r="6" fill="#888" stroke="#555"/><path d="M51 8l3 4" stroke="#eee" stroke-width="1.5"/></svg>
<div class="a" style="left:1379px;top:989px;width:30px;height:21px;background:linear-gradient(#d8eef8,#a8d4e8);border-right:1px solid #777"></div>
<div class="a t" style="left:1381px;top:993px;font-size:13px;color:#111">编组</div>
<div class="a" style="left:1410px;top:989px;width:29px;height:21px;background:linear-gradient(#d8eef8,#a8d4e8);border-right:1px solid #777"></div>
<div class="a t" style="left:1412px;top:993px;font-size:13px;color:#111">基线</div>
<div class="a" style="left:1439px;top:989px;width:30px;height:21px;background:linear-gradient(#d8eef8,#a8d4e8);border-right:1px solid #777"></div>
<div class="a t" style="left:1441px;top:993px;font-size:13px;color:#111">填充</div>
<div class="a" style="left:1469px;top:989px;width:30px;height:21px;background:linear-gradient(#d8eef8,#a8d4e8);border-right:1px solid #777"></div>
<div class="a t" style="left:1471px;top:993px;font-size:13px;color:#111">加粗</div>
<div class="a" style="left:1499px;top:989px;width:54px;height:21px;background:linear-gradient(#c8c8c8,#a8a8a8);border-right:1px solid #777"></div>
<div class="a t" style="left:1501px;top:993px;font-size:13px;color:#111">动态标注</div>
<div class="a" style="left:1554px;top:989px;width:86px;height:21px;background:#8a8a8a"></div>
<div class="a" style="left:1556px;top:991px;width:82px;height:17px;background:#a4a4a4"></div>
<svg class="a" style="left:1558px;top:990px" width="80" height="19"><path d="M2 9l7-6 7 6v7H2z" fill="#f0e0a0" stroke="#777"/><path d="M2 9l7 4 7-4" fill="#9ac0e8" stroke="#456"/><rect x="25" y="6" width="8" height="10" fill="#eee" stroke="#456"/><path d="M20 3l5 3" stroke="#4a90c0" stroke-width="2"/><path d="M42 3h10v12H42z" fill="#2a5ab0"/><path d="M42 10h10" stroke="#f0c020" stroke-width="3"/><path d="M45 12l3 3 5-6" stroke="#20a020" stroke-width="2" fill="none"/><circle cx="67" cy="7" r="5" fill="#f8e890" stroke="#777"/><rect x="65" y="12" width="4" height="5" fill="#ddd" stroke="#777"/></svg>
<svg class="a" style="left:1641px;top:996px" width="10" height="6"><path d="M1 0h7l-3.5 5z" fill="#111"/></svg>
<div class="a" style="left:1655px;top:989px;width:25px;height:21px;background:linear-gradient(#c8c8c8,#a8a8a8);border-left:1px solid #777"></div>
<svg class="a" style="left:1659px;top:991px" width="18" height="17"><rect x="1.5" y="1.5" width="15" height="14" fill="#fff" stroke="#333"/><path d="M1.5 4.5h15" stroke="#333" stroke-width="2"/></svg>
<div class="a" style="left:0px;top:1010px;width:1680px;height:8px;background:linear-gradient(90deg,#1f3d47,#1f3a45 35%,#1d2c3e 65%,#1c2538)"></div>
<div class="a" style="left:48px;top:1010px;width:344px;height:8px;background:#f0f0f0"></div>
<div class="a" style="left:589px;top:1010px;width:45px;height:8px;background:#3a5660"></div>
<div class="a" style="left:1674px;top:1010px;width:1px;height:8px;background:#8a96a8"></div>
<div class="a t" style="left:1575px;top:1015px;font-size:12px;color:#fff">12:45</div>
<svg class="a" style="left:0;top:0;opacity:.66" width="1680" height="1018">
<defs><filter id="sh"><feDropShadow dx="0" dy="1" stdDeviation="1.2" flood-color="#000" flood-opacity=".35"/></filter>
<mask id="dum" maskUnits="userSpaceOnUse" x="0" y="0" width="1680" height="1018"><rect x="0" y="0" width="1680" height="1018" fill="#fff"/><text x="1409" y="925" font-size="40" font-weight="bold" font-family="Liberation Sans" fill="#000" stroke="#000" stroke-width="1.2">du</text></mask></defs>
<g fill="#fff" filter="url(#sh)">
<ellipse cx="1404.5" cy="874.5" rx="11" ry="14"/>
<ellipse cx="1425.5" cy="854.5" rx="11" ry="15"/>
<ellipse cx="1452" cy="856" rx="11" ry="14.5"/>
<ellipse cx="1469" cy="881" rx="10.5" ry="14"/>
<path mask="url(#dum)" d="M1436 878c-10 0-16 10-22 18s-14 12-14 22c0 9 7 14 15 14 8 0 13-2 21-2s13 2 21 2c8 0 15-5 15-14 0-10-8-14-14-22s-12-18-22-18z"/>
<text x="1290" y="931" font-size="68" font-weight="bold" font-family="Liberation Sans" letter-spacing="-3">Bai</text>
<text x="1484" y="926" font-size="50" font-weight="bold" font-family="Liberation Sans" stroke="#fff" stroke-width="1.5">经验</text>
<text x="1292" y="972" font-size="38.2" font-family="Liberation Sans" letter-spacing="-.5">jingyan.baidu.com</text>
</g>
</svg>
<svg class="a" style="left:0;top:0" width="1680" height="1018"><path d="M78 481.2L97.1 482.4 95.3 484.7 325 611.5 91.4 492.4 88.5 495.5Z" fill="#f53838"/></svg>
</body></html>
